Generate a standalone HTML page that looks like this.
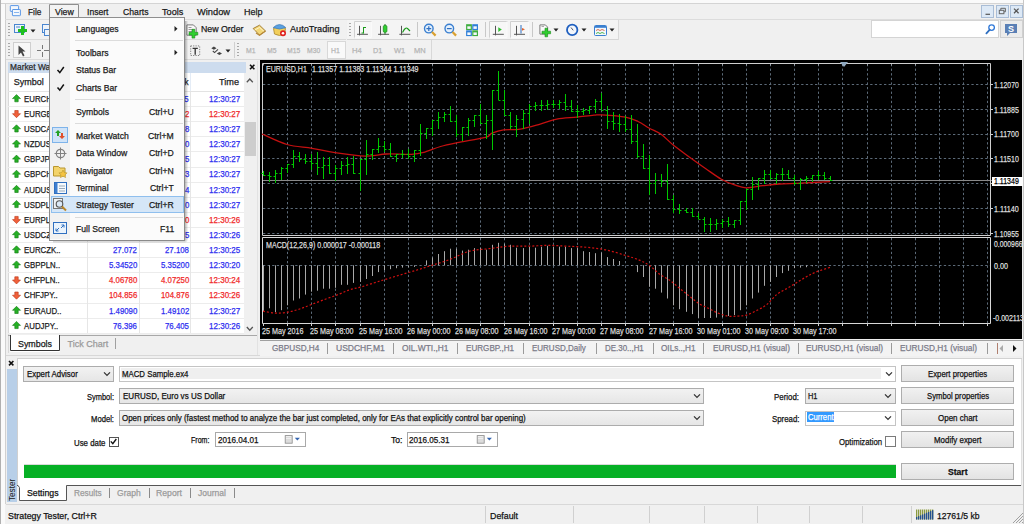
<!DOCTYPE html>
<html><head><meta charset="utf-8"><style>
html,body{margin:0;padding:0;width:1024px;height:524px;overflow:hidden;background:#f0f0f0;}
body{position:relative;font-family:"Liberation Sans",sans-serif;}
body>div,body>svg{position:absolute;}
.t{white-space:nowrap;transform-origin:0 50%;-webkit-text-stroke:0.25px currentColor;}
svg{overflow:visible;}
</style></head><body>
<div style="left:0px;top:0px;width:1024px;height:524px;background:#f0f0f0;"></div>
<div style="left:0px;top:0px;width:1024px;height:3px;background:#fafafa;"></div>
<div style="left:0px;top:3px;width:1024px;height:1px;background:#d4d4d4;"></div>
<div style="left:0px;top:0px;width:1px;height:524px;background:#b0b0b0;"></div>
<div style="left:1px;top:4px;width:4px;height:520px;background:#fafafa;"></div>
<div style="left:5px;top:4px;width:1px;height:500px;background:#d0d0d0;"></div>
<div style="left:1023px;top:0px;width:1px;height:524px;background:#c8c8c8;"></div>
<svg style="left:8px;top:4px;" width="15" height="14" viewBox="8 4 15 14"><rect x="10.3" y="5.6" width="8.3" height="5.8" rx="0.6" fill="#f4f8fd" stroke="#5b98e6"/><rect x="12.4" y="9.5" width="8" height="6.2" rx="0.6" fill="#f4f8fd" stroke="#5b98e6"/><path d="M14 12.5 h5" stroke="#8ab6ee"/></svg>
<div class="t" style="left:27.50px;top:6.81px;font-size:9.5px;line-height:9.5px;color:#1a1a1a;transform:scaleX(0.869);">File</div>
<div class="t" style="left:54.50px;top:6.81px;font-size:9.5px;line-height:9.5px;color:#1a1a1a;transform:scaleX(0.921);">View</div>
<div class="t" style="left:86.80px;top:6.81px;font-size:9.5px;line-height:9.5px;color:#1a1a1a;transform:scaleX(0.905);">Insert</div>
<div class="t" style="left:122.50px;top:6.81px;font-size:9.5px;line-height:9.5px;color:#1a1a1a;transform:scaleX(0.911);">Charts</div>
<div class="t" style="left:162.00px;top:6.81px;font-size:9.5px;line-height:9.5px;color:#1a1a1a;transform:scaleX(0.960);">Tools</div>
<div class="t" style="left:197.00px;top:6.81px;font-size:9.5px;line-height:9.5px;color:#1a1a1a;transform:scaleX(0.977);">Window</div>
<div class="t" style="left:244.00px;top:6.81px;font-size:9.5px;line-height:9.5px;color:#1a1a1a;transform:scaleX(0.947);">Help</div>
<div style="left:5px;top:19px;width:1018px;height:1px;background:#dcdcdc;"></div>
<div style="left:981px;top:4.5px;width:13px;height:13px;background:#dde9f6;box-sizing:border-box;border:1px solid #a9bdd6;"></div>
<div style="left:995.5px;top:4.5px;width:13px;height:13px;background:#dde9f6;box-sizing:border-box;border:1px solid #a9bdd6;"></div>
<div style="left:1010px;top:4.5px;width:13px;height:13px;background:#dde9f6;box-sizing:border-box;border:1px solid #a9bdd6;"></div>
<svg style="left:981px;top:4px;" width="42" height="14" viewBox="981 4 42 14"><line x1="985.5" y1="14.3" x2="990" y2="14.3" stroke="#555" stroke-width="1.2"/><rect x="999.3" y="10.3" width="4.6" height="3.4" fill="none" stroke="#666"/><path d="M1000.8 10.3 V8.3 H1005.4 V11.8 H1003.9" fill="none" stroke="#666"/><path d="M1014 8.6 L1018.6 13.2 M1018.6 8.6 L1014 13.2" stroke="#555" stroke-width="1.3"/></svg>
<div style="left:6px;top:20px;width:340px;height:19px;background:#f1f1f1;"></div>
<div style="left:6px;top:39px;width:340px;height:1px;background:#dadada;"></div>
<div style="left:347px;top:20px;width:272px;height:19px;background:#f4f4f4;"></div>
<div style="left:347px;top:39px;width:272px;height:1px;background:#d6d6d6;"></div>
<div style="left:618px;top:20px;width:1px;height:20px;background:#dadada;"></div>
<div style="left:6px;top:40px;width:426px;height:19px;background:#f1f1f1;"></div>
<div style="left:6px;top:59px;width:426px;height:1px;background:#dadada;"></div>
<div style="left:431px;top:40px;width:1px;height:19px;background:#d8d8d8;"></div>
<svg style="left:8px;top:23px;" width="2" height="14" viewBox="8 23 2 14"><rect x="8" y="23" width="2" height="1" fill="#a8a8a8"/><rect x="8" y="26" width="2" height="1" fill="#a8a8a8"/><rect x="8" y="29" width="2" height="1" fill="#a8a8a8"/><rect x="8" y="32" width="2" height="1" fill="#a8a8a8"/><rect x="8" y="35" width="2" height="1" fill="#a8a8a8"/></svg>
<svg style="left:8px;top:43px;" width="2" height="14" viewBox="8 43 2 14"><rect x="8" y="43" width="2" height="1" fill="#a8a8a8"/><rect x="8" y="46" width="2" height="1" fill="#a8a8a8"/><rect x="8" y="49" width="2" height="1" fill="#a8a8a8"/><rect x="8" y="52" width="2" height="1" fill="#a8a8a8"/><rect x="8" y="55" width="2" height="1" fill="#a8a8a8"/></svg>
<svg style="left:349px;top:23px;" width="2" height="14" viewBox="349 23 2 14"><rect x="349" y="23" width="2" height="1" fill="#a8a8a8"/><rect x="349" y="26" width="2" height="1" fill="#a8a8a8"/><rect x="349" y="29" width="2" height="1" fill="#a8a8a8"/><rect x="349" y="32" width="2" height="1" fill="#a8a8a8"/><rect x="349" y="35" width="2" height="1" fill="#a8a8a8"/></svg>
<svg style="left:237px;top:43px;" width="2" height="14" viewBox="237 43 2 14"><rect x="237" y="43" width="2" height="1" fill="#a8a8a8"/><rect x="237" y="46" width="2" height="1" fill="#a8a8a8"/><rect x="237" y="49" width="2" height="1" fill="#a8a8a8"/><rect x="237" y="52" width="2" height="1" fill="#a8a8a8"/><rect x="237" y="55" width="2" height="1" fill="#a8a8a8"/></svg>
<svg style="left:13px;top:23px;" width="16" height="15" viewBox="13 23 16 15"><rect x="14.5" y="24.5" width="10" height="8" fill="#eef4fb" stroke="#4a86d0"/><line x1="16" y1="27" x2="20" y2="27" stroke="#4a86d0"/><path d="M21 26 h3 v3 h3 v3 h-3 v3 h-3 v-3 h-3 v-3 h3 z" fill="#1fbf1f"/></svg>
<svg style="left:30px;top:28.5px;" width="6" height="4" viewBox="30 28.5 6 4"><path d="M30.5 29 L35.5 29 L33 32 Z" fill="#222"/></svg>
<svg style="left:41px;top:23px;" width="9" height="14" viewBox="41 23 9 14"><rect x="42.5" y="24.5" width="8" height="8" fill="#eef4fb" stroke="#4a86d0"/><rect x="44.5" y="29.5" width="6" height="6" fill="#eef4fb" stroke="#4a86d0"/></svg>
<svg style="left:186px;top:23px;" width="14" height="15" viewBox="186 23 14 15"><path d="M186.9 24.9 h6.5 l2.8 2.8 v7.5 h-9.3 z" fill="#f8f8f8" stroke="#7a7a7a"/><path d="M188.5 27.5 h3 M188.5 29.5 h5 M188.5 31.5 h4" stroke="#9a9a9a"/><path d="M192 29.3 h2.8 v3 h3 v2.8 h-3 v3 h-2.8 v-3 h-3 v-2.8 h3 z" fill="#2fcf2f" stroke="#1a8a1a" stroke-width="0.6"/></svg>
<div class="t" style="left:201.00px;top:24.41px;font-size:9.5px;line-height:9.5px;color:#1a1a1a;transform:scaleX(0.925);">New Order</div>
<svg style="left:251px;top:23px;" width="16" height="14" viewBox="251 23 16 14"><path d="M253.2 28.5 L259.5 25.2 L265.5 31 L259.5 35.2 Z" fill="#f3d779" stroke="#9c7428" stroke-width="0.9"/><path d="M254.5 30.2 L259.6 27.4 L264 31.4" fill="none" stroke="#fff6cf" stroke-width="0.9"/><path d="M256 33 L259.5 35.2 L265.5 31" fill="none" stroke="#b88a3a" stroke-width="1.2"/></svg>
<svg style="left:272px;top:22px;" width="16" height="16" viewBox="272 22 16 16"><path d="M273.5 28.5 Q279.5 24 285.5 28.5 L284.5 34 Q279.5 37 274.5 34 Z" fill="#f2cf5a" stroke="#a8842b" stroke-width="0.8"/><path d="M273.2 27.6 Q279.5 21.5 285.8 27.6 Q279.5 30.5 273.2 27.6 Z" fill="#5aa0e0" stroke="#3b78b8" stroke-width="0.7"/><circle cx="283" cy="33.3" r="3" fill="#e02020"/><circle cx="283" cy="33.3" r="1.3" fill="#fff"/></svg>
<div class="t" style="left:289.70px;top:24.41px;font-size:9.5px;line-height:9.5px;color:#1a1a1a;transform:scaleX(0.963);">AutoTrading</div>
<div style="left:353.5px;top:21px;width:17.8px;height:17.2px;background:#f7f7f7;"></div>
<svg style="left:353.5px;top:21px;" width="17.8" height="17.2" viewBox="353.5 21 17.8 17.2"><path d="M354 38.2 V21.5 H371.3" fill="none" stroke="#d0d0d0"/><path d="M354 37.7 H370.8 V21.5" fill="none" stroke="#fbfbfb"/></svg>
<div style="left:488.7px;top:21px;width:18.5px;height:17.2px;background:#f7f7f7;"></div>
<svg style="left:488.7px;top:21px;" width="18.5" height="17.2" viewBox="488.7 21 18.5 17.2"><path d="M489.2 38.2 V21.5 H507.2" fill="none" stroke="#d0d0d0"/><path d="M489.2 37.7 H506.7 V21.5" fill="none" stroke="#fbfbfb"/></svg>
<div style="left:510.3px;top:21px;width:18.8px;height:17.2px;background:#f7f7f7;"></div>
<svg style="left:510.3px;top:21px;" width="18.8" height="17.2" viewBox="510.3 21 18.8 17.2"><path d="M510.8 38.2 V21.5 H529.1" fill="none" stroke="#d0d0d0"/><path d="M510.8 37.7 H528.6 V21.5" fill="none" stroke="#fbfbfb"/></svg>
<svg style="left:352px;top:21px;" width="180" height="17" viewBox="352 21 180 17"><path d="M359.5 25.8 V35.4 M357 34.3 H367.9" stroke="#555" fill="none"/><path d="M363.5 27 V33.5 M363.5 27.5 H366 M361.5 33 H363.5" stroke="#1a9a1a" fill="none"/><path d="M380.5 25.8 V35.4 M378.1 34.3 H389.1" stroke="#555" fill="none"/><line x1="385" y1="24" x2="385" y2="34.5" stroke="#1f6f1f"/><rect x="383.3" y="25.5" width="3.6" height="6.8" rx="1.2" fill="#2fcf2f" stroke="#1f8f1f" stroke-width="0.8"/><path d="M401.5 25.8 V35.4 M399.4 34.3 H410.3" stroke="#555" fill="none"/><path d="M402.5 32.5 Q405.5 26.5 407.5 28.5 T410 31" fill="none" stroke="#1a9a1a" stroke-width="1.1"/><line x1="417.5" y1="22" x2="417.5" y2="37" stroke="#c8c8c8"/><circle cx="428.8" cy="28.6" r="4.3" fill="#e4f0fc" stroke="#3a7fd0" stroke-width="1.4"/><path d="M426.4 28.6 h4.8 M428.8 26.2 v4.8" stroke="#2f6fc0" stroke-width="1.2"/><path d="M432 32 l3.6 3.6" stroke="#d9a030" stroke-width="2.2"/><circle cx="449.3" cy="28.6" r="4.3" fill="#e4f0fc" stroke="#3a7fd0" stroke-width="1.4"/><path d="M446.9 28.6 h4.8" stroke="#2f6fc0" stroke-width="1.2"/><path d="M452.5 32 l3.6 3.6" stroke="#d9a030" stroke-width="2.2"/><rect x="466.1" y="24.2" width="5.8" height="5.8" fill="#3fae3f"/><rect x="472.2" y="24.2" width="5.8" height="5.8" fill="#2f7fd8"/><rect x="466.1" y="30.3" width="5.8" height="5.8" fill="#2f7fd8"/><rect x="472.2" y="30.3" width="5.8" height="5.8" fill="#3fae3f"/><rect x="467.3" y="26.3" width="3.4" height="2.6" fill="#f4f8fc"/><rect x="473.4" y="26.3" width="3.4" height="2.6" fill="#f4f8fc"/><rect x="467.3" y="32.4" width="3.4" height="2.6" fill="#f4f8fc"/><rect x="473.4" y="32.4" width="3.4" height="2.6" fill="#f4f8fc"/><line x1="485.5" y1="22" x2="485.5" y2="37" stroke="#c8c8c8"/></svg>
<svg style="left:488px;top:21px;" width="130" height="17" viewBox="488 21 130 17"><path d="M495.5 25.8 V35.4 M492.8 34.3 H503.8" stroke="#555" fill="none"/><path d="M498.3 27.2 L501.8 29.6 L498.3 32 Z" fill="#2fbf2f"/><path d="M516.5 25.8 V35.4 M514 34.3 H525" stroke="#555" fill="none"/><line x1="521" y1="25" x2="521" y2="33.5" stroke="#2f6fc0"/><path d="M522 27.9 L525 29.3 L522 30.7 Z" fill="#e0602a"/><line x1="532.5" y1="22" x2="532.5" y2="37" stroke="#c8c8c8"/><path d="M539.9 24.9 h5.5 l2.2 2.2 v7 h-7.7 z" fill="#fafafa" stroke="#7a7a7a"/><path d="M541.5 26.5 h2.5" stroke="#aaa"/><path d="M545 28.2 h2.6 v3 h3 v2.6 h-3 v3 h-2.6 v-3 h-3 v-2.6 h3 z" fill="#2fcf2f" stroke="#1a8a1a" stroke-width="0.6"/><circle cx="572.2" cy="29.9" r="5.2" fill="#f2f6fb" stroke="#1f5fbf" stroke-width="1.8"/><path d="M571 27.5 l2.2 2.8" stroke="#556" stroke-width="1"/><rect x="594.5" y="25.5" width="12" height="10" rx="1" fill="#f4f8fc" stroke="#3a7fd0"/><rect x="595" y="26" width="11" height="1.8" fill="#3a7fd0"/><path d="M596 30.5 l2 -1 l2 1 l2 -1 l2.5 1" stroke="#d06040" fill="none" stroke-width="0.9"/><path d="M596 33.5 l2 -1 l2 1 l2 -1 l2.5 1" stroke="#3cb043" fill="none" stroke-width="0.9"/></svg>
<svg style="left:553.2px;top:28.3px;" width="6" height="4" viewBox="553.2 28.3 6 4"><path d="M553.7 28.8 L558.7 28.8 L556.2 31.8 Z" fill="#222"/></svg>
<svg style="left:580.8px;top:28.3px;" width="6" height="4" viewBox="580.8 28.3 6 4"><path d="M581.3 28.8 L586.3 28.8 L583.8 31.8 Z" fill="#222"/></svg>
<svg style="left:609.1px;top:28.3px;" width="6" height="4" viewBox="609.1 28.3 6 4"><path d="M609.6 28.8 L614.6 28.8 L612.1 31.8 Z" fill="#222"/></svg>
<div style="left:870.5px;top:20px;width:128.5px;height:18px;background:#ffffff;box-sizing:border-box;border:1px solid #d4d4d4;"></div>
<svg style="left:983px;top:22px;" width="12" height="14" viewBox="983 22 12 14"><circle cx="991.6" cy="27.6" r="2.8" fill="#fff" stroke="#2f78d8" stroke-width="1.3"/><path d="M989.6 29.8 l-3.2 3.6" stroke="#2f6fc0" stroke-width="1.8" stroke-linecap="round"/></svg>
<div style="left:1000px;top:20px;width:22.5px;height:18px;background:#ececec;box-sizing:border-box;border:1px solid #d0d0d0;"></div>
<svg style="left:1003px;top:22px;" width="18" height="15" viewBox="1003 22 18 15"><path d="M1005 24 h12 v9 h-7 l-3 3 v-3 h-2 z" fill="#5a7fb5"/><text x="1011" y="31.5" font-size="9" font-weight="bold" fill="#fff" text-anchor="middle" font-family="Liberation Sans">S</text></svg>
<div style="left:12.5px;top:41.5px;width:18px;height:16px;background:#f7f7f7;box-sizing:border-box;border:1px solid #cfcfcf;"></div>
<svg style="left:12px;top:41px;" width="40" height="17" viewBox="12 41 40 17"><path d="M18.5 45.5 L18.5 55 L21 52.5 L23 56.5 L24.5 55.5 L22.5 51.5 L25.5 51.5 Z" fill="#444"/><path d="M42.5 45 v12 M37 50.5 h12" stroke="#777"/><rect x="41" y="49" width="3" height="3" fill="#f1f1f1"/></svg>
<svg style="left:188px;top:43px;" width="45" height="15" viewBox="188 43 45 15"><rect x="190.7" y="45.9" width="9" height="9.6" fill="none" stroke="#666" stroke-width="0.8" stroke-dasharray="1.2,1.2"/><path d="M192.6 48.3 h5.2 M195.2 48.3 v6.4" stroke="#333" stroke-width="1.3"/><path d="M211.3 48.2 L213.9 46.6 L216.5 48.2 L213.9 49.8 Z M216.8 53.5 L219.4 51.9 L222 53.5 L219.4 55.1 Z" fill="#444"/><path d="M212.8 51 L214.6 52.6 L218 49.4" fill="none" stroke="#444" stroke-width="1.1"/></svg>
<svg style="left:224.6px;top:48.5px;" width="6" height="4" viewBox="224.6 48.5 6 4"><path d="M225.1 49 L230.1 49 L227.6 52 Z" fill="#222"/></svg>
<div style="left:234px;top:42px;width:1px;height:16px;background:#d0d0d0;"></div>
<div style="left:326.5px;top:40.5px;width:19px;height:18px;background:#f9f9f9;box-sizing:border-box;border:1px solid #d8d8d8;"></div>
<div class="t" style="left:245.90px;top:47.14px;font-size:8px;line-height:8px;color:#b4b4b4;transform:scaleX(0.855);">M1</div>
<div class="t" style="left:267.20px;top:47.14px;font-size:8px;line-height:8px;color:#b4b4b4;transform:scaleX(0.855);">M5</div>
<div class="t" style="left:286.90px;top:47.14px;font-size:8px;line-height:8px;color:#b4b4b4;transform:scaleX(0.848);">M15</div>
<div class="t" style="left:307.40px;top:47.14px;font-size:8px;line-height:8px;color:#b4b4b4;transform:scaleX(0.848);">M30</div>
<div class="t" style="left:331.00px;top:47.14px;font-size:8px;line-height:8px;color:#b4b4b4;transform:scaleX(0.861);">H1</div>
<div class="t" style="left:351.50px;top:47.14px;font-size:8px;line-height:8px;color:#b4b4b4;transform:scaleX(0.958);">H4</div>
<div class="t" style="left:373.00px;top:47.14px;font-size:8px;line-height:8px;color:#b4b4b4;transform:scaleX(0.909);">D1</div>
<div class="t" style="left:394.00px;top:47.14px;font-size:8px;line-height:8px;color:#b4b4b4;transform:scaleX(0.933);">W1</div>
<div class="t" style="left:414.00px;top:47.14px;font-size:8px;line-height:8px;color:#b4b4b4;transform:scaleX(0.940);">MN</div>
<div style="left:6px;top:60px;width:254px;height:298px;background:#f0f0f0;"></div>
<div style="left:257px;top:61px;width:1px;height:295px;background:#e2e2e2;"></div>
<div style="left:8px;top:62px;width:238px;height:10.5px;background:#cddcee;"></div>
<div class="t" style="left:10.00px;top:63.42px;font-size:9px;line-height:9px;color:#2a2a2a;transform:scaleX(0.930);">Market Watch: 12:30:27</div>
<svg style="left:248px;top:63px;" width="9" height="8" viewBox="248 63 9 8"><path d="M250 64.8 L254.4 69.2 M254.4 64.8 L250 69.2" stroke="#111" stroke-width="1.6"/></svg>
<div style="left:8px;top:73px;width:236px;height:260px;background:#ffffff;"></div>
<div style="left:8px;top:73px;width:1px;height:280px;background:#d9d9d9;"></div>
<div style="left:8px;top:91px;width:236px;height:1px;background:#e3e3e3;"></div>
<div style="left:87px;top:73px;width:1px;height:18px;background:#e4ecf6;"></div>
<div style="left:139px;top:73px;width:1px;height:18px;background:#e4ecf6;"></div>
<div style="left:190px;top:73px;width:1px;height:18px;background:#e4ecf6;"></div>
<div class="t" style="left:13.80px;top:77.82px;font-size:9px;line-height:9px;color:#222;">Symbol</div>
<div class="t" style="left:125.29px;top:77.82px;font-size:9px;line-height:9px;color:#222;transform:scaleX(0.900);">Bid</div>
<div class="t" style="left:175.20px;top:77.82px;font-size:9px;line-height:9px;color:#222;transform:scaleX(0.900);">Ask</div>
<div class="t" style="left:218.90px;top:77.82px;font-size:9px;line-height:9px;color:#222;transform:scaleX(1.017);">Time</div>
<div style="left:8px;top:106px;width:236px;height:1px;background:#ececec;"></div>
<div class="t" style="left:24.40px;top:94.82px;font-size:9px;line-height:9px;color:#1a1a1a;transform:scaleX(0.870);">EURCHF..</div>
<div class="t" style="left:109.48px;top:94.82px;font-size:9px;line-height:9px;color:#2f2ff0;transform:scaleX(0.870);">1.11235</div>
<div class="t" style="left:161.08px;top:94.82px;font-size:9px;line-height:9px;color:#2f2ff0;transform:scaleX(0.870);">1.11245</div>
<div class="t" style="left:208.70px;top:94.82px;font-size:9px;line-height:9px;color:#2f2ff0;transform:scaleX(0.893);">12:30:27</div>
<div style="left:8px;top:121px;width:236px;height:1px;background:#ececec;"></div>
<div class="t" style="left:24.40px;top:109.94px;font-size:9px;line-height:9px;color:#1a1a1a;transform:scaleX(0.870);">EURGBP..</div>
<div class="t" style="left:108.90px;top:109.94px;font-size:9px;line-height:9px;color:#f02a2a;transform:scaleX(0.870);">0.76129</div>
<div class="t" style="left:160.50px;top:109.94px;font-size:9px;line-height:9px;color:#f02a2a;transform:scaleX(0.870);">0.76142</div>
<div class="t" style="left:208.70px;top:109.94px;font-size:9px;line-height:9px;color:#f02a2a;transform:scaleX(0.893);">12:30:27</div>
<div style="left:8px;top:136px;width:236px;height:1px;background:#ececec;"></div>
<div class="t" style="left:24.40px;top:125.06px;font-size:9px;line-height:9px;color:#1a1a1a;transform:scaleX(0.870);">USDCAD..</div>
<div class="t" style="left:108.90px;top:125.06px;font-size:9px;line-height:9px;color:#2f2ff0;transform:scaleX(0.870);">1.30568</div>
<div class="t" style="left:160.50px;top:125.06px;font-size:9px;line-height:9px;color:#2f2ff0;transform:scaleX(0.870);">1.30588</div>
<div class="t" style="left:208.70px;top:125.06px;font-size:9px;line-height:9px;color:#2f2ff0;transform:scaleX(0.893);">12:30:27</div>
<div style="left:8px;top:151px;width:236px;height:1px;background:#ececec;"></div>
<div class="t" style="left:24.40px;top:140.18px;font-size:9px;line-height:9px;color:#1a1a1a;transform:scaleX(0.870);">NZDUSD..</div>
<div class="t" style="left:108.90px;top:140.18px;font-size:9px;line-height:9px;color:#2f2ff0;transform:scaleX(0.870);">0.67520</div>
<div class="t" style="left:160.50px;top:140.18px;font-size:9px;line-height:9px;color:#2f2ff0;transform:scaleX(0.870);">0.67540</div>
<div class="t" style="left:208.70px;top:140.18px;font-size:9px;line-height:9px;color:#2f2ff0;transform:scaleX(0.893);">12:30:27</div>
<div style="left:8px;top:167px;width:236px;height:1px;background:#ececec;"></div>
<div class="t" style="left:24.40px;top:155.30px;font-size:9px;line-height:9px;color:#1a1a1a;transform:scaleX(0.870);">GBPJPY..</div>
<div class="t" style="left:108.90px;top:155.30px;font-size:9px;line-height:9px;color:#2f2ff0;transform:scaleX(0.870);">161.715</div>
<div class="t" style="left:160.50px;top:155.30px;font-size:9px;line-height:9px;color:#2f2ff0;transform:scaleX(0.870);">161.735</div>
<div class="t" style="left:208.70px;top:155.30px;font-size:9px;line-height:9px;color:#2f2ff0;transform:scaleX(0.893);">12:30:27</div>
<div style="left:8px;top:182px;width:236px;height:1px;background:#ececec;"></div>
<div class="t" style="left:24.40px;top:170.42px;font-size:9px;line-height:9px;color:#1a1a1a;transform:scaleX(0.870);">GBPCHF..</div>
<div class="t" style="left:108.90px;top:170.42px;font-size:9px;line-height:9px;color:#2f2ff0;transform:scaleX(0.870);">1.45093</div>
<div class="t" style="left:160.50px;top:170.42px;font-size:9px;line-height:9px;color:#2f2ff0;transform:scaleX(0.870);">1.45123</div>
<div class="t" style="left:208.70px;top:170.42px;font-size:9px;line-height:9px;color:#2f2ff0;transform:scaleX(0.893);">12:30:27</div>
<div style="left:8px;top:197px;width:236px;height:1px;background:#ececec;"></div>
<div class="t" style="left:24.40px;top:185.54px;font-size:9px;line-height:9px;color:#1a1a1a;transform:scaleX(0.870);">AUDUSD..</div>
<div class="t" style="left:108.90px;top:185.54px;font-size:9px;line-height:9px;color:#2f2ff0;transform:scaleX(0.870);">0.72224</div>
<div class="t" style="left:160.50px;top:185.54px;font-size:9px;line-height:9px;color:#2f2ff0;transform:scaleX(0.870);">0.72234</div>
<div class="t" style="left:208.70px;top:185.54px;font-size:9px;line-height:9px;color:#2f2ff0;transform:scaleX(0.893);">12:30:27</div>
<div style="left:8px;top:212px;width:236px;height:1px;background:#ececec;"></div>
<div class="t" style="left:24.40px;top:200.66px;font-size:9px;line-height:9px;color:#1a1a1a;transform:scaleX(0.870);">USDPLN..</div>
<div class="t" style="left:108.90px;top:200.66px;font-size:9px;line-height:9px;color:#2f2ff0;transform:scaleX(0.870);">3.94010</div>
<div class="t" style="left:160.50px;top:200.66px;font-size:9px;line-height:9px;color:#2f2ff0;transform:scaleX(0.870);">3.94060</div>
<div class="t" style="left:208.70px;top:200.66px;font-size:9px;line-height:9px;color:#2f2ff0;transform:scaleX(0.893);">12:30:27</div>
<div style="left:8px;top:227px;width:236px;height:1px;background:#ececec;"></div>
<div class="t" style="left:24.40px;top:215.78px;font-size:9px;line-height:9px;color:#1a1a1a;transform:scaleX(0.870);">EURPLN..</div>
<div class="t" style="left:108.90px;top:215.78px;font-size:9px;line-height:9px;color:#f02a2a;transform:scaleX(0.870);">4.38530</div>
<div class="t" style="left:160.50px;top:215.78px;font-size:9px;line-height:9px;color:#f02a2a;transform:scaleX(0.870);">4.38660</div>
<div class="t" style="left:208.70px;top:215.78px;font-size:9px;line-height:9px;color:#f02a2a;transform:scaleX(0.893);">12:30:26</div>
<div style="left:8px;top:242px;width:236px;height:1px;background:#ececec;"></div>
<div class="t" style="left:24.40px;top:230.90px;font-size:9px;line-height:9px;color:#1a1a1a;transform:scaleX(0.870);">USDCZK..</div>
<div class="t" style="left:108.90px;top:230.90px;font-size:9px;line-height:9px;color:#2f2ff0;transform:scaleX(0.870);">24.2485</div>
<div class="t" style="left:160.50px;top:230.90px;font-size:9px;line-height:9px;color:#2f2ff0;transform:scaleX(0.870);">24.2525</div>
<div class="t" style="left:208.70px;top:230.90px;font-size:9px;line-height:9px;color:#2f2ff0;transform:scaleX(0.893);">12:30:26</div>
<div style="left:8px;top:257px;width:236px;height:1px;background:#ececec;"></div>
<div class="t" style="left:24.40px;top:246.02px;font-size:9px;line-height:9px;color:#1a1a1a;transform:scaleX(0.870);">EURCZK..</div>
<div class="t" style="left:113.25px;top:246.02px;font-size:9px;line-height:9px;color:#2f2ff0;transform:scaleX(0.870);">27.072</div>
<div class="t" style="left:164.85px;top:246.02px;font-size:9px;line-height:9px;color:#2f2ff0;transform:scaleX(0.870);">27.108</div>
<div class="t" style="left:208.70px;top:246.02px;font-size:9px;line-height:9px;color:#2f2ff0;transform:scaleX(0.893);">12:30:25</div>
<div style="left:8px;top:272px;width:236px;height:1px;background:#ececec;"></div>
<div class="t" style="left:24.40px;top:261.14px;font-size:9px;line-height:9px;color:#1a1a1a;transform:scaleX(0.870);">GBPPLN..</div>
<div class="t" style="left:108.90px;top:261.14px;font-size:9px;line-height:9px;color:#2f2ff0;transform:scaleX(0.870);">5.34520</div>
<div class="t" style="left:160.50px;top:261.14px;font-size:9px;line-height:9px;color:#2f2ff0;transform:scaleX(0.870);">5.35200</div>
<div class="t" style="left:208.70px;top:261.14px;font-size:9px;line-height:9px;color:#2f2ff0;transform:scaleX(0.893);">12:30:20</div>
<div style="left:8px;top:288px;width:236px;height:1px;background:#ececec;"></div>
<div class="t" style="left:24.40px;top:276.26px;font-size:9px;line-height:9px;color:#1a1a1a;transform:scaleX(0.870);">CHFPLN..</div>
<div class="t" style="left:108.90px;top:276.26px;font-size:9px;line-height:9px;color:#f02a2a;transform:scaleX(0.870);">4.06780</div>
<div class="t" style="left:160.50px;top:276.26px;font-size:9px;line-height:9px;color:#f02a2a;transform:scaleX(0.870);">4.07250</div>
<div class="t" style="left:208.70px;top:276.26px;font-size:9px;line-height:9px;color:#f02a2a;transform:scaleX(0.893);">12:30:24</div>
<div style="left:8px;top:303px;width:236px;height:1px;background:#ececec;"></div>
<div class="t" style="left:24.40px;top:291.38px;font-size:9px;line-height:9px;color:#1a1a1a;transform:scaleX(0.870);">CHFJPY..</div>
<div class="t" style="left:108.90px;top:291.38px;font-size:9px;line-height:9px;color:#f02a2a;transform:scaleX(0.870);">104.856</div>
<div class="t" style="left:160.50px;top:291.38px;font-size:9px;line-height:9px;color:#f02a2a;transform:scaleX(0.870);">104.876</div>
<div class="t" style="left:208.70px;top:291.38px;font-size:9px;line-height:9px;color:#f02a2a;transform:scaleX(0.893);">12:30:26</div>
<div style="left:8px;top:318px;width:236px;height:1px;background:#ececec;"></div>
<div class="t" style="left:24.40px;top:306.50px;font-size:9px;line-height:9px;color:#1a1a1a;transform:scaleX(0.870);">EURAUD..</div>
<div class="t" style="left:108.90px;top:306.50px;font-size:9px;line-height:9px;color:#2f2ff0;transform:scaleX(0.870);">1.49090</div>
<div class="t" style="left:160.50px;top:306.50px;font-size:9px;line-height:9px;color:#2f2ff0;transform:scaleX(0.870);">1.49102</div>
<div class="t" style="left:208.70px;top:306.50px;font-size:9px;line-height:9px;color:#2f2ff0;transform:scaleX(0.893);">12:30:27</div>
<div style="left:8px;top:333px;width:236px;height:1px;background:#ececec;"></div>
<div class="t" style="left:24.40px;top:321.62px;font-size:9px;line-height:9px;color:#1a1a1a;transform:scaleX(0.870);">AUDJPY..</div>
<div class="t" style="left:113.25px;top:321.62px;font-size:9px;line-height:9px;color:#2f2ff0;transform:scaleX(0.870);">76.396</div>
<div class="t" style="left:164.85px;top:321.62px;font-size:9px;line-height:9px;color:#2f2ff0;transform:scaleX(0.870);">76.405</div>
<div class="t" style="left:208.70px;top:321.62px;font-size:9px;line-height:9px;color:#2f2ff0;transform:scaleX(0.893);">12:30:26</div>
<svg style="left:8px;top:91px;" width="20" height="245" viewBox="8 91 20 245"><path d="M16.5 94.6 l-4 4 h2.3 v3.2 h3.4 v-3.2 h2.3 z" fill="#25b025" stroke="#127a12" stroke-width="0.6"/><path d="M16.5 117.7 l-4 -4 h2.3 v-3.2 h3.4 v3.2 h2.3 z" fill="#f0603a" stroke="#b83010" stroke-width="0.6"/><path d="M16.5 124.8 l-4 4 h2.3 v3.2 h3.4 v-3.2 h2.3 z" fill="#25b025" stroke="#127a12" stroke-width="0.6"/><path d="M16.5 140.0 l-4 4 h2.3 v3.2 h3.4 v-3.2 h2.3 z" fill="#25b025" stroke="#127a12" stroke-width="0.6"/><path d="M16.5 155.1 l-4 4 h2.3 v3.2 h3.4 v-3.2 h2.3 z" fill="#25b025" stroke="#127a12" stroke-width="0.6"/><path d="M16.5 170.2 l-4 4 h2.3 v3.2 h3.4 v-3.2 h2.3 z" fill="#25b025" stroke="#127a12" stroke-width="0.6"/><path d="M16.5 185.3 l-4 4 h2.3 v3.2 h3.4 v-3.2 h2.3 z" fill="#25b025" stroke="#127a12" stroke-width="0.6"/><path d="M16.5 200.4 l-4 4 h2.3 v3.2 h3.4 v-3.2 h2.3 z" fill="#25b025" stroke="#127a12" stroke-width="0.6"/><path d="M16.5 223.6 l-4 -4 h2.3 v-3.2 h3.4 v3.2 h2.3 z" fill="#f0603a" stroke="#b83010" stroke-width="0.6"/><path d="M16.5 230.7 l-4 4 h2.3 v3.2 h3.4 v-3.2 h2.3 z" fill="#25b025" stroke="#127a12" stroke-width="0.6"/><path d="M16.5 245.8 l-4 4 h2.3 v3.2 h3.4 v-3.2 h2.3 z" fill="#25b025" stroke="#127a12" stroke-width="0.6"/><path d="M16.5 260.9 l-4 4 h2.3 v3.2 h3.4 v-3.2 h2.3 z" fill="#25b025" stroke="#127a12" stroke-width="0.6"/><path d="M16.5 284.0 l-4 -4 h2.3 v-3.2 h3.4 v3.2 h2.3 z" fill="#f0603a" stroke="#b83010" stroke-width="0.6"/><path d="M16.5 299.2 l-4 -4 h2.3 v-3.2 h3.4 v3.2 h2.3 z" fill="#f0603a" stroke="#b83010" stroke-width="0.6"/><path d="M16.5 306.3 l-4 4 h2.3 v3.2 h3.4 v-3.2 h2.3 z" fill="#25b025" stroke="#127a12" stroke-width="0.6"/><path d="M16.5 321.4 l-4 4 h2.3 v3.2 h3.4 v-3.2 h2.3 z" fill="#25b025" stroke="#127a12" stroke-width="0.6"/></svg>
<div style="left:87px;top:92px;width:1px;height:241px;background:#e6e6e6;"></div>
<div style="left:139px;top:92px;width:1px;height:241px;background:#e6e6e6;"></div>
<div style="left:190px;top:92px;width:1px;height:241px;background:#e6e6e6;"></div>
<div style="left:244px;top:73px;width:13px;height:260px;background:#f0f0f0;"></div>
<div style="left:245px;top:122px;width:11px;height:34px;background:#cdcdcd;"></div>
<svg style="left:244px;top:73px;" width="13" height="260" viewBox="244 73 13 260"><path d="M246.8 82.2 L249.8 79 L252.8 82.2" fill="none" stroke="#555" stroke-width="1.3"/><path d="M246.8 327 L249.8 330.2 L252.8 327" fill="none" stroke="#555" stroke-width="1.3"/></svg>
<div style="left:8px;top:335px;width:249px;height:1px;background:#a8a8a8;"></div>
<div style="left:10px;top:335px;width:50px;height:17px;background:#ffffff;"></div>
<svg style="left:9px;top:334px;" width="52" height="19" viewBox="9 334 52 19"><path d="M10.5 335 V350.5 H59.5 V335" fill="none" stroke="#333"/></svg>
<div class="t" style="left:18.00px;top:339.82px;font-size:9px;line-height:9px;color:#1a1a1a;transform:scaleX(0.985);">Symbols</div>
<div class="t" style="left:67.50px;top:339.82px;font-size:9px;line-height:9px;color:#9a9a9a;">Tick Chart</div>
<div style="left:115px;top:338px;width:1px;height:11px;background:#a0a0a0;"></div>
<div style="left:6px;top:355px;width:254px;height:1px;background:#d8d8d8;"></div>
<div style="left:260px;top:60px;width:762px;height:279px;background:#000000;"></div>
<svg style="left:260px;top:61px;" width="762" height="278" viewBox="260 61 762 278"><line x1="287.5" y1="64" x2="287.5" y2="235" stroke="#5c6a78" stroke-dasharray="2.3 2.3"/><line x1="287.5" y1="238" x2="287.5" y2="323" stroke="#5c6a78" stroke-dasharray="2.3 2.3"/><line x1="311.5" y1="64" x2="311.5" y2="235" stroke="#5c6a78" stroke-dasharray="2.3 2.3"/><line x1="311.5" y1="238" x2="311.5" y2="323" stroke="#5c6a78" stroke-dasharray="2.3 2.3"/><line x1="335.5" y1="64" x2="335.5" y2="235" stroke="#5c6a78" stroke-dasharray="2.3 2.3"/><line x1="335.5" y1="238" x2="335.5" y2="323" stroke="#5c6a78" stroke-dasharray="2.3 2.3"/><line x1="360.5" y1="64" x2="360.5" y2="235" stroke="#5c6a78" stroke-dasharray="2.3 2.3"/><line x1="360.5" y1="238" x2="360.5" y2="323" stroke="#5c6a78" stroke-dasharray="2.3 2.3"/><line x1="384.5" y1="64" x2="384.5" y2="235" stroke="#5c6a78" stroke-dasharray="2.3 2.3"/><line x1="384.5" y1="238" x2="384.5" y2="323" stroke="#5c6a78" stroke-dasharray="2.3 2.3"/><line x1="408.5" y1="64" x2="408.5" y2="235" stroke="#5c6a78" stroke-dasharray="2.3 2.3"/><line x1="408.5" y1="238" x2="408.5" y2="323" stroke="#5c6a78" stroke-dasharray="2.3 2.3"/><line x1="432.5" y1="64" x2="432.5" y2="235" stroke="#5c6a78" stroke-dasharray="2.3 2.3"/><line x1="432.5" y1="238" x2="432.5" y2="323" stroke="#5c6a78" stroke-dasharray="2.3 2.3"/><line x1="456.5" y1="64" x2="456.5" y2="235" stroke="#5c6a78" stroke-dasharray="2.3 2.3"/><line x1="456.5" y1="238" x2="456.5" y2="323" stroke="#5c6a78" stroke-dasharray="2.3 2.3"/><line x1="480.5" y1="64" x2="480.5" y2="235" stroke="#5c6a78" stroke-dasharray="2.3 2.3"/><line x1="480.5" y1="238" x2="480.5" y2="323" stroke="#5c6a78" stroke-dasharray="2.3 2.3"/><line x1="504.5" y1="64" x2="504.5" y2="235" stroke="#5c6a78" stroke-dasharray="2.3 2.3"/><line x1="504.5" y1="238" x2="504.5" y2="323" stroke="#5c6a78" stroke-dasharray="2.3 2.3"/><line x1="529.5" y1="64" x2="529.5" y2="235" stroke="#5c6a78" stroke-dasharray="2.3 2.3"/><line x1="529.5" y1="238" x2="529.5" y2="323" stroke="#5c6a78" stroke-dasharray="2.3 2.3"/><line x1="553.5" y1="64" x2="553.5" y2="235" stroke="#5c6a78" stroke-dasharray="2.3 2.3"/><line x1="553.5" y1="238" x2="553.5" y2="323" stroke="#5c6a78" stroke-dasharray="2.3 2.3"/><line x1="577.5" y1="64" x2="577.5" y2="235" stroke="#5c6a78" stroke-dasharray="2.3 2.3"/><line x1="577.5" y1="238" x2="577.5" y2="323" stroke="#5c6a78" stroke-dasharray="2.3 2.3"/><line x1="601.5" y1="64" x2="601.5" y2="235" stroke="#5c6a78" stroke-dasharray="2.3 2.3"/><line x1="601.5" y1="238" x2="601.5" y2="323" stroke="#5c6a78" stroke-dasharray="2.3 2.3"/><line x1="625.5" y1="64" x2="625.5" y2="235" stroke="#5c6a78" stroke-dasharray="2.3 2.3"/><line x1="625.5" y1="238" x2="625.5" y2="323" stroke="#5c6a78" stroke-dasharray="2.3 2.3"/><line x1="649.5" y1="64" x2="649.5" y2="235" stroke="#5c6a78" stroke-dasharray="2.3 2.3"/><line x1="649.5" y1="238" x2="649.5" y2="323" stroke="#5c6a78" stroke-dasharray="2.3 2.3"/><line x1="673.5" y1="64" x2="673.5" y2="235" stroke="#5c6a78" stroke-dasharray="2.3 2.3"/><line x1="673.5" y1="238" x2="673.5" y2="323" stroke="#5c6a78" stroke-dasharray="2.3 2.3"/><line x1="698.5" y1="64" x2="698.5" y2="235" stroke="#5c6a78" stroke-dasharray="2.3 2.3"/><line x1="698.5" y1="238" x2="698.5" y2="323" stroke="#5c6a78" stroke-dasharray="2.3 2.3"/><line x1="722.5" y1="64" x2="722.5" y2="235" stroke="#5c6a78" stroke-dasharray="2.3 2.3"/><line x1="722.5" y1="238" x2="722.5" y2="323" stroke="#5c6a78" stroke-dasharray="2.3 2.3"/><line x1="746.5" y1="64" x2="746.5" y2="235" stroke="#5c6a78" stroke-dasharray="2.3 2.3"/><line x1="746.5" y1="238" x2="746.5" y2="323" stroke="#5c6a78" stroke-dasharray="2.3 2.3"/><line x1="770.5" y1="64" x2="770.5" y2="235" stroke="#5c6a78" stroke-dasharray="2.3 2.3"/><line x1="770.5" y1="238" x2="770.5" y2="323" stroke="#5c6a78" stroke-dasharray="2.3 2.3"/><line x1="794.5" y1="64" x2="794.5" y2="235" stroke="#5c6a78" stroke-dasharray="2.3 2.3"/><line x1="794.5" y1="238" x2="794.5" y2="323" stroke="#5c6a78" stroke-dasharray="2.3 2.3"/><line x1="818.5" y1="64" x2="818.5" y2="235" stroke="#5c6a78" stroke-dasharray="2.3 2.3"/><line x1="818.5" y1="238" x2="818.5" y2="323" stroke="#5c6a78" stroke-dasharray="2.3 2.3"/><line x1="842.5" y1="64" x2="842.5" y2="235" stroke="#5c6a78" stroke-dasharray="2.3 2.3"/><line x1="842.5" y1="238" x2="842.5" y2="323" stroke="#5c6a78" stroke-dasharray="2.3 2.3"/><line x1="867.5" y1="64" x2="867.5" y2="235" stroke="#5c6a78" stroke-dasharray="2.3 2.3"/><line x1="867.5" y1="238" x2="867.5" y2="323" stroke="#5c6a78" stroke-dasharray="2.3 2.3"/><line x1="891.5" y1="64" x2="891.5" y2="235" stroke="#5c6a78" stroke-dasharray="2.3 2.3"/><line x1="891.5" y1="238" x2="891.5" y2="323" stroke="#5c6a78" stroke-dasharray="2.3 2.3"/><line x1="915.5" y1="64" x2="915.5" y2="235" stroke="#5c6a78" stroke-dasharray="2.3 2.3"/><line x1="915.5" y1="238" x2="915.5" y2="323" stroke="#5c6a78" stroke-dasharray="2.3 2.3"/><line x1="939.5" y1="64" x2="939.5" y2="235" stroke="#5c6a78" stroke-dasharray="2.3 2.3"/><line x1="939.5" y1="238" x2="939.5" y2="323" stroke="#5c6a78" stroke-dasharray="2.3 2.3"/><line x1="963.5" y1="64" x2="963.5" y2="235" stroke="#5c6a78" stroke-dasharray="2.3 2.3"/><line x1="963.5" y1="238" x2="963.5" y2="323" stroke="#5c6a78" stroke-dasharray="2.3 2.3"/><line x1="987.5" y1="64" x2="987.5" y2="235" stroke="#5c6a78" stroke-dasharray="2.3 2.3"/><line x1="987.5" y1="238" x2="987.5" y2="323" stroke="#5c6a78" stroke-dasharray="2.3 2.3"/><line x1="263" y1="84.5" x2="990" y2="84.5" stroke="#5c6a78" stroke-dasharray="2.3 2.3"/><line x1="263" y1="109.5" x2="990" y2="109.5" stroke="#5c6a78" stroke-dasharray="2.3 2.3"/><line x1="263" y1="134.5" x2="990" y2="134.5" stroke="#5c6a78" stroke-dasharray="2.3 2.3"/><line x1="263" y1="158.5" x2="990" y2="158.5" stroke="#5c6a78" stroke-dasharray="2.3 2.3"/><line x1="263" y1="183.5" x2="990" y2="183.5" stroke="#5c6a78" stroke-dasharray="2.3 2.3"/><line x1="263" y1="208.5" x2="990" y2="208.5" stroke="#5c6a78" stroke-dasharray="2.3 2.3"/><line x1="263" y1="233.5" x2="990" y2="233.5" stroke="#5c6a78" stroke-dasharray="2.3 2.3"/><line x1="263" y1="265.5" x2="990" y2="265.5" stroke="#5c6a78" stroke-dasharray="2.3 2.3"/><line x1="263" y1="180.5" x2="1022" y2="180.5" stroke="#8a8a8a"/><path d="M262.5 235.5 V63.5 H990.5 V235.5 H262.5" fill="none" stroke="#cfcfcf"/><path d="M262.5 323.5 V237.5 H990.5 V323.5 H262.5" fill="none" stroke="#d8d8d8"/><line x1="263.5" y1="64" x2="263.5" y2="65.5" stroke="#9aa0a8"/><line x1="263.5" y1="323" x2="263.5" y2="326" stroke="#d0d0d0"/><line x1="287.5" y1="64" x2="287.5" y2="65.5" stroke="#9aa0a8"/><line x1="287.5" y1="323" x2="287.5" y2="326" stroke="#d0d0d0"/><line x1="311.5" y1="64" x2="311.5" y2="65.5" stroke="#9aa0a8"/><line x1="311.5" y1="323" x2="311.5" y2="326" stroke="#d0d0d0"/><line x1="335.5" y1="64" x2="335.5" y2="65.5" stroke="#9aa0a8"/><line x1="335.5" y1="323" x2="335.5" y2="326" stroke="#d0d0d0"/><line x1="360.5" y1="64" x2="360.5" y2="65.5" stroke="#9aa0a8"/><line x1="360.5" y1="323" x2="360.5" y2="326" stroke="#d0d0d0"/><line x1="384.5" y1="64" x2="384.5" y2="65.5" stroke="#9aa0a8"/><line x1="384.5" y1="323" x2="384.5" y2="326" stroke="#d0d0d0"/><line x1="408.5" y1="64" x2="408.5" y2="65.5" stroke="#9aa0a8"/><line x1="408.5" y1="323" x2="408.5" y2="326" stroke="#d0d0d0"/><line x1="432.5" y1="64" x2="432.5" y2="65.5" stroke="#9aa0a8"/><line x1="432.5" y1="323" x2="432.5" y2="326" stroke="#d0d0d0"/><line x1="456.5" y1="64" x2="456.5" y2="65.5" stroke="#9aa0a8"/><line x1="456.5" y1="323" x2="456.5" y2="326" stroke="#d0d0d0"/><line x1="480.5" y1="64" x2="480.5" y2="65.5" stroke="#9aa0a8"/><line x1="480.5" y1="323" x2="480.5" y2="326" stroke="#d0d0d0"/><line x1="504.5" y1="64" x2="504.5" y2="65.5" stroke="#9aa0a8"/><line x1="504.5" y1="323" x2="504.5" y2="326" stroke="#d0d0d0"/><line x1="529.5" y1="64" x2="529.5" y2="65.5" stroke="#9aa0a8"/><line x1="529.5" y1="323" x2="529.5" y2="326" stroke="#d0d0d0"/><line x1="553.5" y1="64" x2="553.5" y2="65.5" stroke="#9aa0a8"/><line x1="553.5" y1="323" x2="553.5" y2="326" stroke="#d0d0d0"/><line x1="577.5" y1="64" x2="577.5" y2="65.5" stroke="#9aa0a8"/><line x1="577.5" y1="323" x2="577.5" y2="326" stroke="#d0d0d0"/><line x1="601.5" y1="64" x2="601.5" y2="65.5" stroke="#9aa0a8"/><line x1="601.5" y1="323" x2="601.5" y2="326" stroke="#d0d0d0"/><line x1="625.5" y1="64" x2="625.5" y2="65.5" stroke="#9aa0a8"/><line x1="625.5" y1="323" x2="625.5" y2="326" stroke="#d0d0d0"/><line x1="649.5" y1="64" x2="649.5" y2="65.5" stroke="#9aa0a8"/><line x1="649.5" y1="323" x2="649.5" y2="326" stroke="#d0d0d0"/><line x1="673.5" y1="64" x2="673.5" y2="65.5" stroke="#9aa0a8"/><line x1="673.5" y1="323" x2="673.5" y2="326" stroke="#d0d0d0"/><line x1="698.5" y1="64" x2="698.5" y2="65.5" stroke="#9aa0a8"/><line x1="698.5" y1="323" x2="698.5" y2="326" stroke="#d0d0d0"/><line x1="722.5" y1="64" x2="722.5" y2="65.5" stroke="#9aa0a8"/><line x1="722.5" y1="323" x2="722.5" y2="326" stroke="#d0d0d0"/><line x1="746.5" y1="64" x2="746.5" y2="65.5" stroke="#9aa0a8"/><line x1="746.5" y1="323" x2="746.5" y2="326" stroke="#d0d0d0"/><line x1="770.5" y1="64" x2="770.5" y2="65.5" stroke="#9aa0a8"/><line x1="770.5" y1="323" x2="770.5" y2="326" stroke="#d0d0d0"/><line x1="794.5" y1="64" x2="794.5" y2="65.5" stroke="#9aa0a8"/><line x1="794.5" y1="323" x2="794.5" y2="326" stroke="#d0d0d0"/><line x1="818.5" y1="64" x2="818.5" y2="65.5" stroke="#9aa0a8"/><line x1="818.5" y1="323" x2="818.5" y2="326" stroke="#d0d0d0"/><line x1="842.5" y1="64" x2="842.5" y2="65.5" stroke="#9aa0a8"/><line x1="842.5" y1="323" x2="842.5" y2="326" stroke="#d0d0d0"/><line x1="867.5" y1="64" x2="867.5" y2="65.5" stroke="#9aa0a8"/><line x1="867.5" y1="323" x2="867.5" y2="326" stroke="#d0d0d0"/><line x1="891.5" y1="64" x2="891.5" y2="65.5" stroke="#9aa0a8"/><line x1="891.5" y1="323" x2="891.5" y2="326" stroke="#d0d0d0"/><line x1="915.5" y1="64" x2="915.5" y2="65.5" stroke="#9aa0a8"/><line x1="915.5" y1="323" x2="915.5" y2="326" stroke="#d0d0d0"/><line x1="939.5" y1="64" x2="939.5" y2="65.5" stroke="#9aa0a8"/><line x1="939.5" y1="323" x2="939.5" y2="326" stroke="#d0d0d0"/><line x1="963.5" y1="64" x2="963.5" y2="65.5" stroke="#9aa0a8"/><line x1="963.5" y1="323" x2="963.5" y2="326" stroke="#d0d0d0"/><line x1="987.5" y1="64" x2="987.5" y2="65.5" stroke="#9aa0a8"/><line x1="987.5" y1="323" x2="987.5" y2="326" stroke="#d0d0d0"/><path d="M840 62 L848 62 L844 67 Z" fill="#8fa8c0"/><line x1="990" y1="84.5" x2="993" y2="84.5" stroke="#d0d0d0"/><line x1="990" y1="109.5" x2="993" y2="109.5" stroke="#d0d0d0"/><line x1="990" y1="134.5" x2="993" y2="134.5" stroke="#d0d0d0"/><line x1="990" y1="158.5" x2="993" y2="158.5" stroke="#d0d0d0"/><line x1="990" y1="183.5" x2="993" y2="183.5" stroke="#d0d0d0"/><line x1="990" y1="208.5" x2="993" y2="208.5" stroke="#d0d0d0"/><line x1="990" y1="233.5" x2="993" y2="233.5" stroke="#d0d0d0"/><path d="M262 134 C266.17 135.75 278.67 142.12 287 144.5 C295.33 146.88 304.00 146.93 312 148.3 C320.00 149.67 326.17 151.38 335 152.7 C343.83 154.02 356.42 155.98 365 156.2 C373.58 156.42 378.77 154.32 386.5 154 C394.23 153.68 405.15 154.58 411.4 154.3 C417.65 154.02 419.13 153.60 424 152.3 C428.87 151.00 435.07 148.10 440.6 146.5 C446.13 144.90 449.73 144.22 457.2 142.7 C464.67 141.18 479.60 138.98 485.4 137.4 C491.20 135.82 488.95 134.45 492 133.2 C495.05 131.95 498.98 130.58 503.7 129.9 C508.42 129.22 514.22 130.07 520.3 129.1 C526.38 128.13 534.12 125.77 540.2 124.1 C546.28 122.43 550.72 120.27 556.8 119.1 C562.88 117.93 570.50 117.75 576.7 117.1 C582.90 116.45 589.90 115.57 594 115.2 C598.10 114.83 596.07 114.58 601.3 114.9 C606.53 115.22 619.27 116.00 625.4 117.1 C631.53 118.20 634.10 119.65 638.1 121.5 C642.10 123.35 645.52 126.03 649.4 128.2 C653.28 130.37 657.33 131.60 661.4 134.5 C665.47 137.40 669.10 141.82 673.8 145.6 C678.50 149.38 684.20 153.30 689.6 157.2 C695.00 161.10 700.92 165.33 706.2 169 C711.48 172.67 716.57 176.55 721.3 179.2 C726.03 181.85 730.45 183.47 734.6 184.9 C738.75 186.33 741.50 187.67 746.2 187.8 C750.90 187.93 757.27 186.33 762.8 185.7 C768.33 185.07 773.20 184.42 779.4 184 C785.60 183.58 791.57 183.60 800 183.2 C808.43 182.80 825.00 181.87 830 181.6" fill="none" stroke="#c41010" stroke-width="1.3"/><path d="M263.5 171 V176 M261.5 173.5 H263.5 M263.5 175.5 H265.5 M269.5 172 V182 M267.5 175.5 H269.5 M269.5 176.5 H271.5 M275.5 170 V183 M273.5 176.5 H275.5 M275.5 173.5 H277.5 M281.5 167 V180 M279.5 173.5 H281.5 M281.5 168.5 H283.5 M287.5 164 V173 M285.5 168.5 H287.5 M287.5 164.5 H289.5 M293.5 150 V168 M291.5 164.5 H293.5 M293.5 156.5 H295.5 M299.5 152 V162 M297.5 156.5 H299.5 M299.5 159.5 H301.5 M305.5 154 V164 M303.5 159.5 H305.5 M305.5 161.5 H307.5 M311.5 154 V170 M309.5 161.5 H311.5 M311.5 163.5 H313.5 M317.5 152 V175 M315.5 163.5 H317.5 M317.5 167.5 H319.5 M323.5 157 V179 M321.5 167.5 H323.5 M323.5 165.5 H325.5 M329.5 157 V174 M327.5 165.5 H329.5 M329.5 173.5 H331.5 M335.5 165 V181 M333.5 173.5 H335.5 M335.5 168.5 H337.5 M341.5 161 V175 M339.5 168.5 H341.5 M341.5 165.5 H343.5 M347.5 157 V174 M345.5 165.5 H347.5 M347.5 164.5 H349.5 M353.5 156 V174 M351.5 164.5 H353.5 M353.5 173.5 H355.5 M360.5 159 V191 M358.5 173.5 H360.5 M360.5 159.5 H362.5 M366.5 140 V175 M364.5 159.5 H366.5 M366.5 154.5 H368.5 M372.5 149 V160 M370.5 154.5 H372.5 M372.5 149.5 H374.5 M378.5 138 V153 M376.5 149.5 H378.5 M378.5 146.5 H380.5 M384.5 141 V152 M382.5 146.5 H384.5 M384.5 149.5 H386.5 M390.5 143 V157 M388.5 149.5 H390.5 M390.5 156.5 H392.5 M396.5 154 V162 M394.5 156.5 H396.5 M396.5 154.5 H398.5 M402.5 150 V158 M400.5 154.5 H402.5 M402.5 154.5 H404.5 M408.5 149 V159 M406.5 154.5 H408.5 M408.5 156.5 H410.5 M414.5 150 V162 M412.5 156.5 H414.5 M414.5 150.5 H416.5 M420.5 124 V156 M418.5 150.5 H420.5 M420.5 133.5 H422.5 M426.5 128 V139 M424.5 133.5 H426.5 M426.5 128.5 H428.5 M432.5 120 V136 M430.5 128.5 H432.5 M432.5 120.5 H434.5 M438.5 112 V129 M436.5 120.5 H438.5 M438.5 117.5 H440.5 M444.5 112 V122 M442.5 117.5 H444.5 M444.5 114.5 H446.5 M450.5 106 V122 M448.5 114.5 H450.5 M450.5 121.5 H452.5 M456.5 115 V137 M454.5 121.5 H456.5 M456.5 134.5 H458.5 M462.5 127 V141 M460.5 134.5 H462.5 M462.5 127.5 H464.5 M468.5 118 V136 M466.5 127.5 H468.5 M468.5 120.5 H470.5 M474.5 115 V127 M472.5 120.5 H474.5 M474.5 115.5 H476.5 M480.5 104 V124 M478.5 115.5 H480.5 M480.5 123.5 H482.5 M486.5 115 V139 M484.5 123.5 H486.5 M486.5 120.5 H488.5 M492.5 90 V150 M490.5 120.5 H492.5 M492.5 90.5 H494.5 M498.5 71 V100 M496.5 90.5 H498.5 M498.5 100.5 H500.5 M504.5 90 V116 M502.5 100.5 H504.5 M504.5 115.5 H506.5 M510.5 112 V129 M508.5 115.5 H510.5 M510.5 126.5 H512.5 M516.5 115 V137 M514.5 126.5 H516.5 M516.5 119.5 H518.5 M523.5 110 V129 M521.5 119.5 H523.5 M523.5 113.5 H525.5 M529.5 104 V124 M527.5 113.5 H529.5 M529.5 106.5 H531.5 M535.5 102 V111 M533.5 106.5 H535.5 M535.5 105.5 H537.5 M541.5 100 V111 M539.5 105.5 H541.5 M541.5 105.5 H543.5 M547.5 100 V110 M545.5 105.5 H547.5 M547.5 104.5 H549.5 M553.5 100 V108 M551.5 104.5 H553.5 M553.5 104.5 H555.5 M559.5 100 V109 M557.5 104.5 H559.5 M559.5 102.5 H561.5 M565.5 94 V111 M563.5 102.5 H565.5 M565.5 106.5 H567.5 M571.5 100 V112 M569.5 106.5 H571.5 M571.5 111.5 H573.5 M577.5 105 V118 M575.5 111.5 H577.5 M577.5 111.5 H579.5 M583.5 108 V115 M581.5 111.5 H583.5 M583.5 110.5 H585.5 M589.5 106 V114 M587.5 110.5 H589.5 M589.5 106.5 H591.5 M595.5 99 V113 M593.5 106.5 H595.5 M595.5 101.5 H597.5 M601.5 93 V110 M599.5 101.5 H601.5 M601.5 110.5 H603.5 M607.5 106 V129 M605.5 110.5 H607.5 M607.5 121.5 H609.5 M613.5 112 V130 M611.5 121.5 H613.5 M613.5 123.5 H615.5 M619.5 114 V132 M617.5 123.5 H619.5 M619.5 124.5 H621.5 M625.5 116 V132 M623.5 124.5 H625.5 M625.5 129.5 H627.5 M631.5 115 V144 M629.5 129.5 H631.5 M631.5 141.5 H633.5 M637.5 124 V158 M635.5 141.5 H637.5 M637.5 156.5 H639.5 M643.5 144 V169 M641.5 156.5 H643.5 M643.5 168.5 H645.5 M649.5 155 V195 M647.5 168.5 H649.5 M649.5 183.5 H651.5 M655.5 173 V194 M653.5 183.5 H655.5 M655.5 180.5 H657.5 M661.5 174 V187 M659.5 180.5 H661.5 M661.5 181.5 H663.5 M667.5 164 V200 M665.5 181.5 H667.5 M667.5 199.5 H669.5 M673.5 195 V213 M671.5 199.5 H673.5 M673.5 209.5 H675.5 M679.5 204 V214 M677.5 209.5 H679.5 M679.5 210.5 H681.5 M686.5 208 V213 M684.5 210.5 H686.5 M686.5 212.5 H688.5 M692.5 208 V217 M690.5 212.5 H692.5 M692.5 216.5 H694.5 M698.5 213 V219 M696.5 216.5 H698.5 M698.5 219.5 H700.5 M704.5 217 V232 M702.5 219.5 H704.5 M704.5 224.5 H706.5 M710.5 218 V232 M708.5 224.5 H710.5 M710.5 224.5 H712.5 M716.5 219 V230 M714.5 224.5 H716.5 M716.5 223.5 H718.5 M722.5 219 V228 M720.5 223.5 H722.5 M722.5 221.5 H724.5 M728.5 217 V227 M726.5 221.5 H728.5 M728.5 224.5 H730.5 M734.5 220 V228 M732.5 224.5 H734.5 M734.5 220.5 H736.5 M740.5 201 V225 M738.5 220.5 H740.5 M740.5 201.5 H742.5 M746.5 189 V210 M744.5 201.5 H746.5 M746.5 189.5 H748.5 M752.5 177 V200 M750.5 189.5 H752.5 M752.5 184.5 H754.5 M758.5 178 V190 M756.5 184.5 H758.5 M758.5 178.5 H760.5 M764.5 170 V184 M762.5 178.5 H764.5 M764.5 174.5 H766.5 M770.5 170 V179 M768.5 174.5 H770.5 M770.5 178.5 H772.5 M776.5 173 V184 M774.5 178.5 H776.5 M776.5 174.5 H778.5 M782.5 168 V181 M780.5 174.5 H782.5 M782.5 174.5 H784.5 M788.5 170 V179 M786.5 174.5 H788.5 M788.5 178.5 H790.5 M794.5 175 V185 M792.5 178.5 H794.5 M794.5 183.5 H796.5 M800.5 178 V190 M798.5 183.5 H800.5 M800.5 179.5 H802.5 M806.5 176 V183 M804.5 179.5 H806.5 M806.5 178.5 H808.5 M812.5 175 V182 M810.5 178.5 H812.5 M812.5 175.5 H814.5 M818.5 171 V180 M816.5 175.5 H818.5 M818.5 175.5 H820.5 M824.5 172 V180 M822.5 175.5 H824.5 M824.5 178.5 H826.5 M830.5 176 V181 M828.5 178.5 H830.5 M830.5 180.5 H832.5 " stroke="#00c800" fill="none"/><path d="M263.5 265.3 V311.2 M269.5 265.3 V308.3 M275.5 265.3 V312.2 M281.5 265.3 V310.2 M287.5 265.3 V305.3 M293.5 265.3 V300.5 M299.5 265.3 V298.5 M305.5 265.3 V294.6 M311.5 265.3 V291.7 M317.5 265.3 V290.7 M323.5 265.3 V288.7 M329.5 265.3 V288.7 M335.5 265.3 V287.8 M341.5 265.3 V284.8 M347.5 265.3 V284.8 M353.5 265.3 V282.9 M360.5 265.3 V281.9 M366.5 265.3 V279 M372.5 265.3 V276 M378.5 265.3 V272.1 M384.5 265.3 V270.2 M390.5 265.3 V269.2 M396.5 265.3 V268.2 M402.5 265.3 V267.6 M408.5 265.3 V267.2 M414.5 265.3 V266.9 M426.5 265.3 V260.4 M432.5 265.3 V257.5 M438.5 265.3 V254 M444.5 265.3 V251.2 M450.5 265.3 V248.7 M456.5 265.3 V248.7 M462.5 265.3 V250.6 M468.5 265.3 V249.7 M474.5 265.3 V248.1 M480.5 265.3 V248.1 M486.5 265.3 V249.7 M492.5 265.3 V244.8 M498.5 265.3 V242.8 M504.5 265.3 V243.8 M510.5 265.3 V244.8 M516.5 265.3 V247.7 M523.5 265.3 V248.1 M529.5 265.3 V246.7 M535.5 265.3 V247.7 M541.5 265.3 V246.7 M547.5 265.3 V245.8 M553.5 265.3 V246.7 M559.5 265.3 V246.7 M565.5 265.3 V246.7 M571.5 265.3 V248.1 M577.5 265.3 V248.1 M583.5 265.3 V251.2 M589.5 265.3 V252 M595.5 265.3 V253.2 M601.5 265.3 V252.6 M607.5 265.3 V257.1 M613.5 265.3 V259 M619.5 265.3 V261 M631.5 265.3 V266 M637.5 265.3 V272.1 M643.5 265.3 V277 M649.5 265.3 V286.8 M655.5 265.3 V288.7 M661.5 265.3 V292.6 M667.5 265.3 V298.5 M673.5 265.3 V305.3 M679.5 265.3 V309.2 M686.5 265.3 V311.8 M692.5 265.3 V314.1 M698.5 265.3 V318 M704.5 265.3 V318 M710.5 265.3 V318 M716.5 265.3 V317.6 M722.5 265.3 V317 M728.5 265.3 V316 M734.5 265.3 V315.1 M740.5 265.3 V310.2 M746.5 265.3 V305.3 M752.5 265.3 V298.5 M758.5 265.3 V292.6 M764.5 265.3 V285.8 M770.5 265.3 V281.9 M776.5 265.3 V277 M782.5 265.3 V273.1 M788.5 265.3 V270.8 M794.5 265.3 V268.2 M800.5 265.3 V267.6 M806.5 265.3 V267.2 M812.5 265.3 V266.3 " stroke="#a8a8a8" fill="none"/><path d="M263 311.2 C265.10 311.52 271.55 312.93 275.6 313.1 C279.65 313.27 283.40 312.85 287.3 312.2 C291.20 311.55 295.08 310.44 299 309.2 C302.92 307.96 306.55 306.37 310.8 304.75 C315.05 303.13 319.97 301.19 324.5 299.5 C329.03 297.81 333.75 296.23 338 294.6 C342.25 292.97 346.07 291.00 350 289.7 C353.93 288.40 357.07 288.10 361.6 286.8 C366.13 285.50 371.35 283.70 377.2 281.9 C383.05 280.10 390.18 277.95 396.7 276 C403.22 274.05 410.42 271.98 416.3 270.2 C422.18 268.42 426.38 267.10 432 265.3 C437.62 263.50 443.75 261.75 450 259.4 C456.25 257.05 463.00 252.98 469.5 251.2 C476.00 249.42 482.48 249.53 489 248.7 C495.52 247.87 502.08 246.62 508.6 246.2 C515.12 245.78 521.58 246.33 528.1 246.2 C534.62 246.07 541.18 245.40 547.7 245.4 C554.22 245.40 560.70 245.88 567.2 246.2 C573.70 246.52 580.18 246.67 586.7 247.3 C593.22 247.93 599.78 248.63 606.3 250 C612.82 251.37 620.18 253.77 625.8 255.5 C631.42 257.23 636.00 258.70 640 260.4 C644.00 262.10 646.55 263.42 649.8 265.7 C653.05 267.98 656.25 271.72 659.5 274.1 C662.75 276.48 666.05 277.72 669.3 280 C672.55 282.28 675.75 285.20 679 287.8 C682.25 290.40 685.53 293.00 688.8 295.6 C692.07 298.20 695.33 301.28 698.6 303.4 C701.87 305.52 705.15 306.68 708.4 308.3 C711.65 309.92 714.85 311.80 718.1 313.1 C721.35 314.40 724.63 315.60 727.9 316.1 C731.17 316.60 734.62 316.27 737.7 316.1 C740.78 315.93 743.15 316.08 746.4 315.1 C749.65 314.12 753.77 311.98 757.2 310.2 C760.63 308.42 763.75 307.00 767 304.4 C770.25 301.80 773.45 297.22 776.7 294.6 C779.95 291.98 783.25 290.65 786.5 288.7 C789.75 286.75 792.95 284.85 796.2 282.9 C799.45 280.95 802.73 278.80 806 277 C809.27 275.20 811.73 273.73 815.8 272.1 C819.87 270.47 827.97 268.02 830.4 267.2" fill="none" stroke="#d01010" stroke-width="1.2" stroke-dasharray="2 2"/></svg>
<div class="t" style="left:265.75px;top:65.23px;font-size:8.5px;line-height:8.5px;color:#dcdcdc;transform:scaleX(0.831);">EURUSD,H1</div>
<div class="t" style="left:311.50px;top:65.23px;font-size:8.5px;line-height:8.5px;color:#dcdcdc;transform:scaleX(0.836);">1.11357 1.11383 1.11344 1.11349</div>
<div class="t" style="left:265.90px;top:240.63px;font-size:8.5px;line-height:8.5px;color:#dcdcdc;transform:scaleX(0.834);">MACD(12,26,9) 0.000017 -0.000118</div>
<div class="t" style="left:994.40px;top:80.83px;font-size:8.5px;line-height:8.5px;color:#dcdcdc;transform:scaleX(0.807);">1.12070</div>
<div class="t" style="left:994.40px;top:105.66px;font-size:8.5px;line-height:8.5px;color:#dcdcdc;transform:scaleX(0.824);">1.11885</div>
<div class="t" style="left:994.40px;top:130.49px;font-size:8.5px;line-height:8.5px;color:#dcdcdc;transform:scaleX(0.824);">1.11700</div>
<div class="t" style="left:994.40px;top:155.32px;font-size:8.5px;line-height:8.5px;color:#dcdcdc;transform:scaleX(0.824);">1.11510</div>
<div class="t" style="left:994.40px;top:204.98px;font-size:8.5px;line-height:8.5px;color:#dcdcdc;transform:scaleX(0.842);">1.11140</div>
<div class="t" style="left:994.40px;top:229.81px;font-size:8.5px;line-height:8.5px;color:#dcdcdc;transform:scaleX(0.807);">1.10955</div>
<div style="left:991.5px;top:177px;width:31px;height:9px;background:#ffffff;"></div>
<div class="t" style="left:994.40px;top:177.43px;font-size:8.5px;line-height:8.5px;color:#000;transform:scaleX(0.824);">1.11349</div>
<div class="t" style="left:993.50px;top:240.43px;font-size:8.5px;line-height:8.5px;color:#dcdcdc;transform:scaleX(0.804);">0.000966</div>
<div class="t" style="left:993.50px;top:261.93px;font-size:8.5px;line-height:8.5px;color:#dcdcdc;transform:scaleX(0.846);">0.00</div>
<div class="t" style="left:993.00px;top:314.43px;font-size:8.5px;line-height:8.5px;color:#dcdcdc;transform:scaleX(0.823);">-0.002113</div>
<div class="t" style="left:262.10px;top:326.63px;font-size:8.5px;line-height:8.5px;color:#dcdcdc;transform:scaleX(0.846);">25 May 2016</div>
<div class="t" style="left:310.40px;top:326.63px;font-size:8.5px;line-height:8.5px;color:#dcdcdc;transform:scaleX(0.843);">25 May 08:00</div>
<div class="t" style="left:358.70px;top:326.63px;font-size:8.5px;line-height:8.5px;color:#dcdcdc;transform:scaleX(0.843);">25 May 16:00</div>
<div class="t" style="left:407.00px;top:326.63px;font-size:8.5px;line-height:8.5px;color:#dcdcdc;transform:scaleX(0.843);">26 May 00:00</div>
<div class="t" style="left:455.30px;top:326.63px;font-size:8.5px;line-height:8.5px;color:#dcdcdc;transform:scaleX(0.843);">26 May 08:00</div>
<div class="t" style="left:503.60px;top:326.63px;font-size:8.5px;line-height:8.5px;color:#dcdcdc;transform:scaleX(0.843);">26 May 16:00</div>
<div class="t" style="left:551.90px;top:326.63px;font-size:8.5px;line-height:8.5px;color:#dcdcdc;transform:scaleX(0.843);">27 May 00:00</div>
<div class="t" style="left:600.20px;top:326.63px;font-size:8.5px;line-height:8.5px;color:#dcdcdc;transform:scaleX(0.843);">27 May 08:00</div>
<div class="t" style="left:648.50px;top:326.63px;font-size:8.5px;line-height:8.5px;color:#dcdcdc;transform:scaleX(0.843);">27 May 16:00</div>
<div class="t" style="left:696.80px;top:326.63px;font-size:8.5px;line-height:8.5px;color:#dcdcdc;transform:scaleX(0.843);">30 May 01:00</div>
<div class="t" style="left:745.10px;top:326.63px;font-size:8.5px;line-height:8.5px;color:#dcdcdc;transform:scaleX(0.843);">30 May 09:00</div>
<div class="t" style="left:793.40px;top:326.63px;font-size:8.5px;line-height:8.5px;color:#dcdcdc;transform:scaleX(0.843);">30 May 17:00</div>
<div style="left:260px;top:340px;width:763px;height:17px;background:#f3f3f3;"></div>
<div style="left:260px;top:340px;width:763px;height:1px;background:#a0a0a0;"></div>
<div class="t" style="left:271.70px;top:344.42px;font-size:9px;line-height:9px;color:#7a7a88;transform:scaleX(0.909);">GBPUSD,H4</div>
<div style="left:327px;top:343px;width:1px;height:11px;background:#9a9a9a;"></div>
<div class="t" style="left:335.50px;top:344.42px;font-size:9px;line-height:9px;color:#7a7a88;transform:scaleX(0.946);">USDCHF,M1</div>
<div style="left:393px;top:343px;width:1px;height:11px;background:#9a9a9a;"></div>
<div class="t" style="left:401.50px;top:344.42px;font-size:9px;line-height:9px;color:#7a7a88;transform:scaleX(0.930);">OIL.WTI.,H1</div>
<div style="left:457px;top:343px;width:1px;height:11px;background:#9a9a9a;"></div>
<div class="t" style="left:466.00px;top:344.42px;font-size:9px;line-height:9px;color:#7a7a88;transform:scaleX(0.900);">EURGBP.,H1</div>
<div style="left:523px;top:343px;width:1px;height:11px;background:#9a9a9a;"></div>
<div class="t" style="left:532.30px;top:344.42px;font-size:9px;line-height:9px;color:#7a7a88;transform:scaleX(0.888);">EURUSD,Daily</div>
<div style="left:596px;top:343px;width:1px;height:11px;background:#9a9a9a;"></div>
<div class="t" style="left:604.70px;top:344.42px;font-size:9px;line-height:9px;color:#7a7a88;transform:scaleX(0.881);">DE.30..,H1</div>
<div style="left:653px;top:343px;width:1px;height:11px;background:#9a9a9a;"></div>
<div class="t" style="left:660.80px;top:344.42px;font-size:9px;line-height:9px;color:#7a7a88;transform:scaleX(0.910);">OILs..,H1</div>
<div style="left:703px;top:343px;width:1px;height:11px;background:#9a9a9a;"></div>
<div class="t" style="left:712.70px;top:344.42px;font-size:9px;line-height:9px;color:#7a7a88;transform:scaleX(0.921);">EURUSD,H1 (visual)</div>
<div style="left:798px;top:343px;width:1px;height:11px;background:#9a9a9a;"></div>
<div class="t" style="left:806.00px;top:344.42px;font-size:9px;line-height:9px;color:#7a7a88;transform:scaleX(0.922);">EURUSD,H1 (visual)</div>
<div style="left:891px;top:343px;width:1px;height:11px;background:#9a9a9a;"></div>
<div class="t" style="left:900.00px;top:344.42px;font-size:9px;line-height:9px;color:#7a7a88;transform:scaleX(0.922);">EURUSD,H1 (visual)</div>
<div style="left:987px;top:343px;width:1px;height:11px;background:#9a9a9a;"></div>
<div style="left:997px;top:343px;width:1px;height:11px;background:#b08070;"></div>
<svg style="left:998px;top:342px;" width="25" height="13" viewBox="998 342 25 13"><path d="M1003 345 L999.5 348.5 L1003 352 Z" fill="#aaa"/><path d="M1013 345 L1016.5 348.5 L1013 352 Z" fill="#111"/></svg>
<div style="left:6px;top:356px;width:1017px;height:148px;background:#f0f0f0;"></div>
<div style="left:17px;top:358px;width:1005px;height:1px;background:#d2d2d2;"></div>
<div style="left:17px;top:359px;width:1004px;height:126px;background:#ffffff;"></div>
<div style="left:17px;top:359px;width:1px;height:127px;background:#d0d0d0;"></div>
<div style="left:1021px;top:359px;width:1px;height:127px;background:#e0e0e0;"></div>
<svg style="left:7px;top:359px;" width="9" height="9" viewBox="7 359 9 9"><path d="M9 361 L13.4 365.4 M13.4 361 L9 365.4" stroke="#111" stroke-width="1.6"/></svg>
<div style="left:7px;top:369px;width:10px;height:133px;background:#b8cfe8;"></div>
<svg style="left:6px;top:470px;" width="12" height="32" viewBox="6 470 12 32"><text x="0" y="0" transform="translate(14.8,501) rotate(-90) scale(0.86,1)" font-size="9.5" font-family="Liberation Sans" fill="#1a1a1a">Tester</text></svg>
<div style="left:23px;top:366px;width:91px;height:16px;background:linear-gradient(#f2f2f2,#e6e6e6);box-sizing:border-box;border:1px solid #acacac;"></div>
<div class="t" style="left:26.70px;top:370.22px;font-size:9px;line-height:9px;color:#111;transform:scaleX(0.875);">Expert Advisor</div>
<svg style="left:102.5px;top:371px;" width="8" height="6" viewBox="102.5 371 8 6"><path d="M103.5 372.4 L106.5 375.4 L109.5 372.4" fill="none" stroke="#333" stroke-width="1.3"/></svg>
<div style="left:119px;top:366px;width:777px;height:16px;background:#ffffff;box-sizing:border-box;border:1px solid #c4c4c4;"></div>
<svg style="left:884.5px;top:371px;" width="8" height="6" viewBox="884.5 371 8 6"><path d="M885.5 372.4 L888.5 375.4 L891.5 372.4" fill="none" stroke="#333" stroke-width="1.3"/></svg>
<div style="left:120.5px;top:368px;width:760px;height:11px;background:#efefef;"></div>
<div class="t" style="left:121.90px;top:370.22px;font-size:9px;line-height:9px;color:#111;transform:scaleX(0.868);">MACD Sample.ex4</div>
<div class="t" style="left:87.00px;top:392.52px;font-size:9px;line-height:9px;color:#111;transform:scaleX(0.830);">Symbol:</div>
<div style="left:119px;top:388px;width:585px;height:15.5px;background:linear-gradient(#f2f2f2,#e6e6e6);box-sizing:border-box;border:1px solid #acacac;"></div>
<div class="t" style="left:122.70px;top:391.97px;font-size:9px;line-height:9px;color:#111;transform:scaleX(0.893);">EURUSD, Euro vs US Dollar</div>
<svg style="left:692.5px;top:392.75px;" width="8" height="6" viewBox="692.5 392.75 8 6"><path d="M693.5 394.15 L696.5 397.15 L699.5 394.15" fill="none" stroke="#333" stroke-width="1.3"/></svg>
<div class="t" style="left:91.00px;top:414.82px;font-size:9px;line-height:9px;color:#111;transform:scaleX(0.851);">Model:</div>
<div style="left:119px;top:410px;width:585px;height:15.6px;background:linear-gradient(#f2f2f2,#e6e6e6);box-sizing:border-box;border:1px solid #acacac;"></div>
<div class="t" style="left:121.90px;top:414.02px;font-size:9px;line-height:9px;color:#111;transform:scaleX(0.884);">Open prices only (fastest method to analyze the bar just completed, only for EAs that explicitly control bar opening)</div>
<svg style="left:692.5px;top:414.8px;" width="8" height="6" viewBox="692.5 414.8 8 6"><path d="M693.5 416.2 L696.5 419.2 L699.5 416.2" fill="none" stroke="#333" stroke-width="1.3"/></svg>
<div class="t" style="left:774.00px;top:392.52px;font-size:9px;line-height:9px;color:#111;transform:scaleX(0.877);">Period:</div>
<div style="left:805px;top:388.2px;width:90.5px;height:15.4px;background:linear-gradient(#f2f2f2,#e6e6e6);box-sizing:border-box;border:1px solid #acacac;"></div>
<div class="t" style="left:808.00px;top:392.12px;font-size:9px;line-height:9px;color:#111;transform:scaleX(0.826);">H1</div>
<svg style="left:884px;top:392.9px;" width="8" height="6" viewBox="884 392.9 8 6"><path d="M885 394.3 L888 397.3 L891 394.3" fill="none" stroke="#333" stroke-width="1.3"/></svg>
<div class="t" style="left:771.50px;top:414.52px;font-size:9px;line-height:9px;color:#111;transform:scaleX(0.872);">Spread:</div>
<div style="left:805px;top:410.5px;width:90.5px;height:15px;background:#ffffff;box-sizing:border-box;border:1px solid #c4c4c4;"></div>
<svg style="left:884px;top:415px;" width="8" height="6" viewBox="884 415 8 6"><path d="M885 416.4 L888 419.4 L891 416.4" fill="none" stroke="#333" stroke-width="1.3"/></svg>
<div style="left:807px;top:412px;width:26.6px;height:10px;background:#3399ff;"></div>
<div class="t" style="left:807.50px;top:413.42px;font-size:9px;line-height:9px;color:#ffffff;transform:scaleX(0.850);">Current</div>
<div class="t" style="left:73.50px;top:438.82px;font-size:9px;line-height:9px;color:#111;transform:scaleX(0.874);">Use date</div>
<div style="left:108.5px;top:436.5px;width:10px;height:10.5px;background:#ffffff;box-sizing:border-box;border:1px solid #555;"></div>
<svg style="left:108px;top:436px;" width="11" height="11" viewBox="108 436 11 11"><path d="M110.8 441.4 L112.8 443.6 L116.3 439" fill="none" stroke="#111" stroke-width="1.4"/></svg>
<div class="t" style="left:191.00px;top:435.52px;font-size:9px;line-height:9px;color:#111;transform:scaleX(0.783);">From:</div>
<div style="left:215px;top:431.8px;width:91px;height:14.8px;background:#ffffff;box-sizing:border-box;border:1px solid #a9a9a9;"></div>
<div class="t" style="left:217.50px;top:435.52px;font-size:9px;line-height:9px;color:#111;transform:scaleX(0.899);">2016.04.01</div>
<div class="t" style="left:390.50px;top:435.52px;font-size:9px;line-height:9px;color:#111;transform:scaleX(0.958);">To:</div>
<div style="left:406.7px;top:431.8px;width:91px;height:14.8px;background:#ffffff;box-sizing:border-box;border:1px solid #a9a9a9;"></div>
<div class="t" style="left:409.20px;top:435.52px;font-size:9px;line-height:9px;color:#111;transform:scaleX(0.899);">2016.05.31</div>
<svg style="left:283px;top:433px;" width="20" height="12" viewBox="283 433 20 12"><rect x="285.2" y="435.6" width="7" height="7.6" fill="#dcdcdc" stroke="#8a8a8a" stroke-width="0.8"/><path d="M286 436.5 h5 M286 438.5 h5" stroke="#f4f4f4" stroke-width="0.8"/><path d="M294.8 437.8 L299.9 437.8 L297.35 440.6 Z" fill="#3565b0"/></svg>
<svg style="left:474.7px;top:433px;" width="20" height="12" viewBox="474.7 433 20 12"><rect x="476.9" y="435.6" width="7" height="7.6" fill="#dcdcdc" stroke="#8a8a8a" stroke-width="0.8"/><path d="M477.7 436.5 h5 M477.7 438.5 h5" stroke="#f4f4f4" stroke-width="0.8"/><path d="M486.5 437.8 L491.6 437.8 L489.05 440.6 Z" fill="#3565b0"/></svg>
<div class="t" style="left:838.50px;top:438.02px;font-size:9px;line-height:9px;color:#111;transform:scaleX(0.860);">Optimization</div>
<div style="left:884.5px;top:436px;width:11px;height:10.8px;background:#ffffff;box-sizing:border-box;border:1px solid #7a7a7a;"></div>
<div style="left:24px;top:464px;width:871.5px;height:14px;background:#06b025;"></div>
<div style="left:24px;top:463.6px;width:871.5px;height:0.8px;background:#dadada;"></div>
<div style="left:901.2px;top:365.3px;width:112.8px;height:17.2px;background:linear-gradient(#f1f1f1,#e3e3e3);box-sizing:border-box;border:1px solid #adadad;"></div>
<div class="t" style="left:928.00px;top:370.12px;font-size:9px;line-height:9px;color:#111;transform:scaleX(0.864);">Expert properties</div>
<div style="left:901.2px;top:387.2px;width:112.8px;height:17.2px;background:linear-gradient(#f1f1f1,#e3e3e3);box-sizing:border-box;border:1px solid #adadad;"></div>
<div class="t" style="left:926.60px;top:392.02px;font-size:9px;line-height:9px;color:#111;transform:scaleX(0.855);">Symbol properties</div>
<div style="left:901.2px;top:409px;width:112.8px;height:17.3px;background:linear-gradient(#f1f1f1,#e3e3e3);box-sizing:border-box;border:1px solid #adadad;"></div>
<div class="t" style="left:937.85px;top:413.87px;font-size:9px;line-height:9px;color:#111;transform:scaleX(0.887);">Open chart</div>
<div style="left:901.2px;top:431px;width:112.8px;height:17.2px;background:linear-gradient(#f1f1f1,#e3e3e3);box-sizing:border-box;border:1px solid #adadad;"></div>
<div class="t" style="left:933.85px;top:435.82px;font-size:9px;line-height:9px;color:#111;transform:scaleX(0.879);">Modify expert</div>
<div style="left:901.2px;top:463px;width:112.8px;height:16.9px;background:linear-gradient(#f1f1f1,#e3e3e3);box-sizing:border-box;border:1px solid #adadad;"></div>
<div class="t" style="left:947.85px;top:467.67px;font-size:9px;line-height:9px;color:#111;font-weight:bold;transform:scaleX(0.951);">Start</div>
<div style="left:19px;top:485px;width:47px;height:15px;background:#ffffff;"></div>
<svg style="left:17px;top:484px;" width="70" height="18" viewBox="17 484 70 18"><path d="M17 485.5 H18 L19.5 487.5 V500.5 H66.5 V485.5 H1021" fill="none" stroke="#555"/></svg>
<div class="t" style="left:27.00px;top:489.02px;font-size:9px;line-height:9px;color:#111;transform:scaleX(0.969);">Settings</div>
<div class="t" style="left:74.00px;top:489.02px;font-size:9px;line-height:9px;color:#9a9a9a;transform:scaleX(0.920);">Results</div>
<div style="left:109px;top:488px;width:1px;height:10px;background:#8a8a8a;"></div>
<div class="t" style="left:117.30px;top:489.02px;font-size:9px;line-height:9px;color:#9a9a9a;transform:scaleX(0.947);">Graph</div>
<div style="left:149px;top:488px;width:1px;height:10px;background:#8a8a8a;"></div>
<div class="t" style="left:156.00px;top:489.02px;font-size:9px;line-height:9px;color:#9a9a9a;transform:scaleX(0.962);">Report</div>
<div style="left:190px;top:488px;width:1px;height:10px;background:#8a8a8a;"></div>
<div class="t" style="left:198.00px;top:489.02px;font-size:9px;line-height:9px;color:#9a9a9a;transform:scaleX(0.949);">Journal</div>
<div style="left:234px;top:488px;width:1px;height:10px;background:#8a8a8a;"></div>
<div style="left:6px;top:504px;width:1017px;height:20px;background:#f0f0f0;"></div>
<div style="left:6px;top:504px;width:1017px;height:1px;background:#d8d8d8;"></div>
<div class="t" style="left:7.60px;top:510.91px;font-size:9.5px;line-height:9.5px;color:#111;transform:scaleX(0.929);">Strategy Tester, Ctrl+R</div>
<div style="left:485px;top:506px;width:1px;height:17px;background:#d0d0d0;"></div>
<div style="left:573px;top:506px;width:1px;height:17px;background:#d0d0d0;"></div>
<div style="left:649px;top:506px;width:1px;height:17px;background:#d0d0d0;"></div>
<div style="left:704px;top:506px;width:1px;height:17px;background:#d0d0d0;"></div>
<div style="left:757px;top:506px;width:1px;height:17px;background:#d0d0d0;"></div>
<div style="left:809px;top:506px;width:1px;height:17px;background:#d0d0d0;"></div>
<div style="left:862px;top:506px;width:1px;height:17px;background:#d0d0d0;"></div>
<div style="left:911px;top:506px;width:1px;height:17px;background:#d0d0d0;"></div>
<div class="t" style="left:490.00px;top:510.91px;font-size:9.5px;line-height:9.5px;color:#111;transform:scaleX(0.930);">Default</div>
<svg style="left:914px;top:508px;" width="20" height="13" viewBox="914 508 20 13"><rect x="916" y="509.5" width="1.3" height="10" fill="#8a9a40"/><rect x="916" y="517" width="1.3" height="2.5" fill="#24508f"/><rect x="918" y="509.5" width="1.3" height="10" fill="#8a9a40"/><rect x="918" y="516.15" width="1.3" height="3.35" fill="#24508f"/><rect x="920" y="509.5" width="1.3" height="10" fill="#8a9a40"/><rect x="920" y="515.3" width="1.3" height="4.2" fill="#24508f"/><rect x="922" y="509.5" width="1.3" height="10" fill="#8a9a40"/><rect x="922" y="514.45" width="1.3" height="5.05" fill="#24508f"/><rect x="924" y="509.5" width="1.3" height="10" fill="#8a9a40"/><rect x="924" y="513.6" width="1.3" height="5.9" fill="#24508f"/><rect x="926" y="509.5" width="1.3" height="10" fill="#8a9a40"/><rect x="926" y="512.75" width="1.3" height="6.75" fill="#24508f"/><rect x="928" y="509.5" width="1.3" height="10" fill="#8a9a40"/><rect x="928" y="511.9" width="1.3" height="7.6" fill="#24508f"/><rect x="930" y="509.5" width="1.3" height="10" fill="#8a9a40"/><rect x="930" y="511.05" width="1.3" height="8.45" fill="#24508f"/><rect x="932" y="509.5" width="1.3" height="10" fill="#8a9a40"/><rect x="932" y="510.2" width="1.3" height="9.3" fill="#24508f"/></svg>
<div class="t" style="left:936.50px;top:510.91px;font-size:9.5px;line-height:9.5px;color:#111;transform:scaleX(0.904);">12761/5 kb</div>
<svg style="left:1011px;top:510px;" width="13" height="14" viewBox="1011 510 13 14"><line x1="1013" y1="523" x2="1023" y2="513" stroke="#a0a0a0"/><line x1="1016" y1="523" x2="1023" y2="516" stroke="#a0a0a0"/><line x1="1019" y1="523" x2="1023" y2="519" stroke="#a0a0a0"/><line x1="1022" y1="523" x2="1023" y2="522" stroke="#a0a0a0"/></svg>
<div style="left:49px;top:4px;width:30px;height:14px;background:#f3f3f3;"></div>
<svg style="left:49px;top:4px;" width="30" height="14" viewBox="49 4 30 14"><path d="M49.5 17.5 V4.5 H78.5 V17.5" fill="none" stroke="#8e8e8e"/></svg>
<div class="t" style="left:54.50px;top:6.81px;font-size:9.5px;line-height:9.5px;color:#1a1a1a;transform:scaleX(0.921);">View</div>
<div style="left:185px;top:21px;width:3px;height:219px;background:linear-gradient(to right,rgba(0,0,0,0.28),rgba(0,0,0,0.02));"></div>
<div style="left:53px;top:240px;width:132px;height:3px;background:linear-gradient(rgba(0,0,0,0.28),rgba(0,0,0,0.02));"></div>
<div style="left:185px;top:240px;width:3px;height:3px;background:radial-gradient(circle at 0 0,rgba(0,0,0,0.25),rgba(0,0,0,0) 3px);"></div>
<div style="left:49px;top:17px;width:136px;height:223.5px;background:#fbfbfb;box-sizing:border-box;border:1px solid #8a8a8a;"></div>
<div style="left:50px;top:18px;width:20px;height:221px;background:#f1f1f1;"></div>
<div style="left:78px;top:17px;width:107px;height:1px;background:#8e8e8e;"></div>
<div style="left:75px;top:40px;width:108px;height:1px;background:#dcdcdc;"></div>
<div style="left:75px;top:99px;width:108px;height:1px;background:#dcdcdc;"></div>
<div style="left:75px;top:123px;width:108px;height:1px;background:#dcdcdc;"></div>
<div style="left:75px;top:217px;width:108px;height:1px;background:#dcdcdc;"></div>
<div style="left:51px;top:196.3px;width:132.5px;height:17.2px;background:#d5e6f7;box-sizing:border-box;border:1px solid #8fbfee;"></div>
<div class="t" style="left:75.50px;top:24.06px;font-size:9.5px;line-height:9.5px;color:#1a1a1a;transform:scaleX(0.907);">Languages</div>
<div class="t" style="left:75.50px;top:47.81px;font-size:9.5px;line-height:9.5px;color:#1a1a1a;transform:scaleX(0.907);">Toolbars</div>
<div class="t" style="left:75.50px;top:65.31px;font-size:9.5px;line-height:9.5px;color:#1a1a1a;transform:scaleX(0.907);">Status Bar</div>
<div class="t" style="left:75.50px;top:82.81px;font-size:9.5px;line-height:9.5px;color:#1a1a1a;transform:scaleX(0.907);">Charts Bar</div>
<div class="t" style="left:75.50px;top:107.06px;font-size:9.5px;line-height:9.5px;color:#1a1a1a;transform:scaleX(0.907);">Symbols</div>
<div class="t" style="left:149.15px;top:107.06px;font-size:9.5px;line-height:9.5px;color:#1a1a1a;transform:scaleX(0.907);">Ctrl+U</div>
<div class="t" style="left:75.50px;top:130.81px;font-size:9.5px;line-height:9.5px;color:#1a1a1a;transform:scaleX(0.907);">Market Watch</div>
<div class="t" style="left:148.19px;top:130.81px;font-size:9.5px;line-height:9.5px;color:#1a1a1a;transform:scaleX(0.907);">Ctrl+M</div>
<div class="t" style="left:75.50px;top:148.31px;font-size:9.5px;line-height:9.5px;color:#1a1a1a;transform:scaleX(0.907);">Data Window</div>
<div class="t" style="left:149.15px;top:148.31px;font-size:9.5px;line-height:9.5px;color:#1a1a1a;transform:scaleX(0.907);">Ctrl+D</div>
<div class="t" style="left:75.50px;top:165.81px;font-size:9.5px;line-height:9.5px;color:#1a1a1a;transform:scaleX(0.907);">Navigator</div>
<div class="t" style="left:149.15px;top:165.81px;font-size:9.5px;line-height:9.5px;color:#1a1a1a;transform:scaleX(0.907);">Ctrl+N</div>
<div class="t" style="left:75.50px;top:182.81px;font-size:9.5px;line-height:9.5px;color:#1a1a1a;transform:scaleX(0.907);">Terminal</div>
<div class="t" style="left:150.10px;top:182.81px;font-size:9.5px;line-height:9.5px;color:#1a1a1a;transform:scaleX(0.907);">Ctrl+T</div>
<div class="t" style="left:75.50px;top:200.31px;font-size:9.5px;line-height:9.5px;color:#1a1a1a;transform:scaleX(0.907);">Strategy Tester</div>
<div class="t" style="left:149.15px;top:200.31px;font-size:9.5px;line-height:9.5px;color:#1a1a1a;transform:scaleX(0.907);">Ctrl+R</div>
<div class="t" style="left:75.50px;top:224.31px;font-size:9.5px;line-height:9.5px;color:#1a1a1a;transform:scaleX(0.907);">Full Screen</div>
<div class="t" style="left:159.59px;top:224.31px;font-size:9.5px;line-height:9.5px;color:#1a1a1a;transform:scaleX(0.907);">F11</div>
<svg style="left:49px;top:17px;" width="140" height="225" viewBox="49 17 140 225"><path d="M174.5 26 L177.5 28.75 L174.5 31.5 Z" fill="#222"/><path d="M174.5 49.75 L177.5 52.5 L174.5 55.25 Z" fill="#222"/><path d="M57.5 70 L59.8 72.6 L63.8 67" fill="none" stroke="#111" stroke-width="1.5"/><path d="M57.5 87.5 L59.8 90.1 L63.8 84.5" fill="none" stroke="#111" stroke-width="1.5"/><rect x="52.5" y="127.5" width="15" height="15" fill="#cfe3f8" stroke="#7db3ea"/><path d="M55 133 l3 -3 l3 3 h-2 v3 h-2 v-3 z" fill="#25a025"/><path d="M59 136 l3 3 l3 -3 h-2 v-3 h-2 v3 z" fill="#e0502a"/><circle cx="60.5" cy="153.5" r="4.2" fill="none" stroke="#808080" stroke-width="1.2"/><path d="M60.5 147.5 v12 M54.5 153.5 h12" stroke="#808080"/><path d="M53.5 166.5 h5 l1.5 1.5 h5 v8 h-11.5 z" fill="#f3d36a" stroke="#b8962e"/><path d="M63 170 l1.3 2.6 l2.8 .3 l-2.1 1.9 l.6 2.8 l-2.6 -1.4 l-2.6 1.4 l.6 -2.8 l-2.1 -1.9 l2.8 -.3 z" fill="#f5c342" stroke="#b8962e" stroke-width="0.6"/><rect x="54.5" y="182.5" width="12" height="11" fill="#f5f9fd" stroke="#2f6fc0"/><rect x="55" y="183" width="2.5" height="10" fill="#3f7fd0"/><path d="M59 186 h6 M59 188.5 h6 M59 191 h6" stroke="#9ab"/><rect x="53.5" y="198.5" width="9" height="10" fill="#eef2f6" stroke="#777"/><circle cx="59.5" cy="204" r="3.3" fill="#dbe9f7" stroke="#555" stroke-width="1.1"/><path d="M62 206.5 l4 4" stroke="#b8862a" stroke-width="2"/><rect x="53.5" y="222.5" width="13" height="11" fill="#eaf3fc" stroke="#2f6fc0"/><path d="M56 231 l3 -3 M56 231 h2.5 M56 231 v-2.5 M64 225 l-3 3 M64 225 h-2.5 M64 225 v2.5" stroke="#2f6fc0"/></svg>
</body></html>
